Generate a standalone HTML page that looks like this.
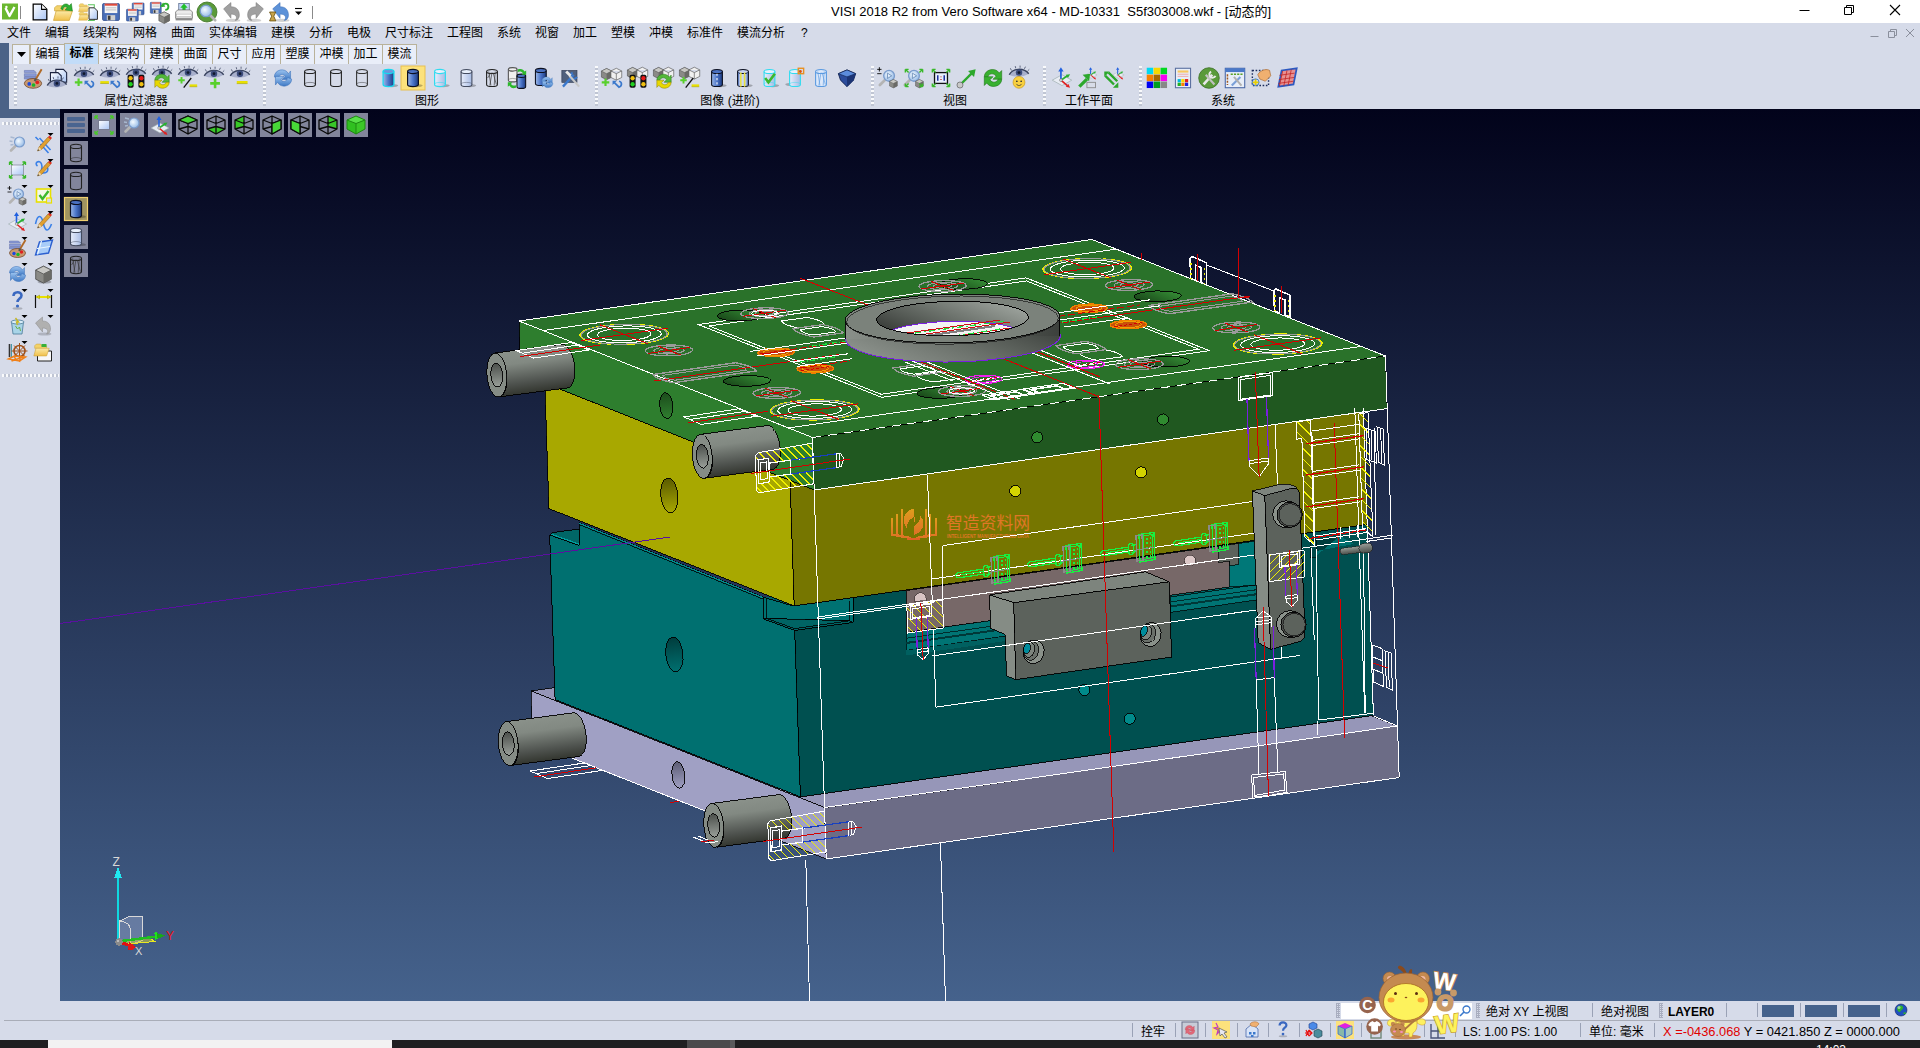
<!DOCTYPE html>
<html lang="zh"><head><meta charset="utf-8"><title>VISI 2018 R2</title>
<style>
*{margin:0;padding:0;box-sizing:border-box}
html,body{width:1920px;height:1048px;overflow:hidden;background:#d6dbe9;font-family:"Liberation Sans","Noto Sans CJK SC",sans-serif;font-size:12px;color:#000}
#app{position:absolute;left:0;top:0;width:1920px;height:1048px;overflow:hidden;background:#d6dbe9}
.abs{position:absolute}
#title{left:0;top:0;width:1920px;height:23px;background:#fff}
#ttext{left:831px;top:4px;width:440px;height:16px;line-height:16px;font-size:13px;white-space:pre;text-align:center;color:#000}
#menu{left:0;top:23px;width:1920px;height:20px;background:#d6dbe9}
.mi{position:absolute;top:1px;height:18px;line-height:18px;font-size:12px;white-space:nowrap}
#strip1{left:0;top:43px;width:9px;height:66px;background:#4b6287}
#strip2{left:0;top:109px;width:60px;height:9px;background:#4b6287}
#tabs{left:12px;top:44px;height:20px}
.tab{position:absolute;top:0;height:20px;line-height:18px;text-align:center;font-size:12px;background:#e9eef9;border:1px solid #b9b29a;border-bottom:none;white-space:nowrap}
.tab.act{font-weight:bold;background:#c2dcf8;border-color:#b9b29a;top:-1px;height:21px;line-height:19px}
#ribbon{left:9px;top:64px;width:1911px;height:45px;background:#d6dbe9}
.grip{position:absolute;width:3px;top:66px;height:40px;background-image:linear-gradient(rgba(255,255,255,.85) 50%,rgba(150,155,170,.35) 50%);background-size:3px 4px}
.glabel{position:absolute;top:94px;height:15px;line-height:15px;font-size:12px;text-align:center;white-space:nowrap;width:120px}
#left{left:0;top:118px;width:60px;height:883px;background:#d6dbe9}
.hgrip{position:absolute;left:2px;width:57px;height:3px;background-image:linear-gradient(90deg,rgba(255,255,255,.85) 50%,rgba(150,155,170,.35) 50%);background-size:4px 3px}
#view{left:60px;top:109px;width:1860px;height:892px;background:linear-gradient(#02031b 0%,#45628c 100%);overflow:hidden}
#st1{left:0;top:1001px;width:1920px;height:19px;background:#d6dbe9}
#st2{left:0;top:1020px;width:1920px;height:20px;background:#d6dbe9}
#task{left:0;top:1040px;width:1920px;height:8px;background:#1f1f21}
.st{position:absolute;white-space:pre;font-size:12px;height:16px;line-height:16px}
.vsep{position:absolute;width:1px;background:#9aa2b6}
.vb{position:absolute;width:24px;height:24px;background:#82859b}
.vb.sel{background:#b9a86a;border:1px solid #e8c860}
svg{position:absolute;overflow:visible}
</style></head><body><div id="app">
<div id="title" class="abs"></div>
<div id="ttext" class="abs">VISI 2018 R2 from Vero Software x64 - MD-10331  S5f303008.wkf - [动态的]</div>
<svg style="left:1790px;top:0" width="130" height="23" viewBox="0 0 130 23"><path d="M9.5 10.5h10" stroke="#000" stroke-width="1" fill="none"/><path d="M54.5 7.5h7v7h-7z M56.5 7.5v-2h7v7h-2" stroke="#000" stroke-width="1" fill="none"/><path d="M100 5l10 10M110 5l-10 10" stroke="#000" stroke-width="1.1" fill="none"/></svg>
<div id="menu" class="abs">
<span class="mi" style="left:7px">文件</span>
<span class="mi" style="left:45px">编辑</span>
<span class="mi" style="left:83px">线架构</span>
<span class="mi" style="left:133px">网格</span>
<span class="mi" style="left:171px">曲面</span>
<span class="mi" style="left:209px">实体编辑</span>
<span class="mi" style="left:271px">建模</span>
<span class="mi" style="left:309px">分析</span>
<span class="mi" style="left:347px">电极</span>
<span class="mi" style="left:385px">尺寸标注</span>
<span class="mi" style="left:447px">工程图</span>
<span class="mi" style="left:497px">系统</span>
<span class="mi" style="left:535px">视窗</span>
<span class="mi" style="left:573px">加工</span>
<span class="mi" style="left:611px">塑模</span>
<span class="mi" style="left:649px">冲模</span>
<span class="mi" style="left:687px">标准件</span>
<span class="mi" style="left:737px">模流分析</span>
<span class="mi" style="left:801px">?</span>
</div>
<svg style="left:1865px;top:25px" width="55" height="16" viewBox="0 0 55 16"><path d="M5.5 11.5h8" stroke="#8a8f9c" stroke-width="1" fill="none"/><path d="M23.5 6.5h6v6h-6z M25.5 6.5v-2h6v6h-2" stroke="#8a8f9c" stroke-width="1" fill="none"/><path d="M41 4l8 8M49 4l-8 8" stroke="#8a8f9c" stroke-width="1" fill="none"/></svg>
<div id="strip1" class="abs"></div><div id="strip2" class="abs"></div>
<div id="tabs" class="abs">
<div class="tab" style="left:0px;width:18px"><svg style="left:4px;top:7px" width="9" height="5"><path d="M0 0h9l-4.5 5z" fill="#000"/></svg></div>
<div class="tab" style="left:18px;width:35px">编辑</div>
<div class="tab act" style="left:52px;width:35px">标准</div>
<div class="tab" style="left:86px;width:47px">线架构</div>
<div class="tab" style="left:132px;width:35px">建模</div>
<div class="tab" style="left:166px;width:35px">曲面</div>
<div class="tab" style="left:200px;width:35px">尺寸</div>
<div class="tab" style="left:234px;width:35px">应用</div>
<div class="tab" style="left:268px;width:35px">塑膜</div>
<div class="tab" style="left:302px;width:35px">冲模</div>
<div class="tab" style="left:336px;width:35px">加工</div>
<div class="tab" style="left:370px;width:35px">模流</div>
</div>
<div id="ribbon" class="abs"></div>
<div class="grip" style="left:14px"></div>
<div class="grip" style="left:263px"></div>
<div class="grip" style="left:595px"></div>
<div class="grip" style="left:871px"></div>
<div class="grip" style="left:1043px"></div>
<div class="grip" style="left:1139px"></div>
<div class="glabel" style="left:76px">属性/过滤器</div>
<div class="glabel" style="left:367px">图形</div>
<div class="glabel" style="left:670px">图像 (进阶)</div>
<div class="glabel" style="left:895px">视图</div>
<div class="glabel" style="left:1029px">工作平面</div>
<div class="glabel" style="left:1163px">系统</div>
<div id="left" class="abs"><div class="hgrip" style="top:4px"></div><div class="hgrip" style="top:256px"></div></div>
<div id="view" class="abs"></div>
<div id="st1" class="abs"></div><div id="st2" class="abs"></div><div id="task" class="abs"></div>
<div class="abs" style="left:4px;top:1020px;width:1916px;height:1px;background:#a9adb8"></div>
<div class="abs" style="left:1341px;top:1003px;width:131px;height:16px;background:#fff"></div>
<div class="abs" style="left:1336px;top:1003px;width:4px;height:15px;background-image:linear-gradient(#8a90a4 50%,rgba(0,0,0,0) 50%),linear-gradient(90deg,#8a90a4 50%,rgba(0,0,0,0) 50%);background-size:2px 2px;opacity:.6"></div>
<div class="abs" style="left:1476px;top:1003px;width:4px;height:15px;background-image:linear-gradient(#8a90a4 50%,rgba(0,0,0,0) 50%),linear-gradient(90deg,#8a90a4 50%,rgba(0,0,0,0) 50%);background-size:2px 2px;opacity:.6"></div>
<div class="abs" style="left:1659px;top:1003px;width:4px;height:15px;background-image:linear-gradient(#8a90a4 50%,rgba(0,0,0,0) 50%),linear-gradient(90deg,#8a90a4 50%,rgba(0,0,0,0) 50%);background-size:2px 2px;opacity:.6"></div>
<span class="st" style="left:1486px;top:1004px">绝对 XY 上视图</span>
<span class="st" style="left:1601px;top:1004px">绝对视图</span>
<span class="st" style="left:1668px;top:1004px;font-weight:bold">LAYER0</span>
<div class="vsep" style="left:1592px;top:1003px;height:14px"></div>
<div class="vsep" style="left:1726px;top:1003px;height:14px"></div>
<div class="vsep" style="left:1757px;top:1003px;height:14px"></div>
<div class="vsep" style="left:1800px;top:1003px;height:14px"></div>
<div class="vsep" style="left:1843px;top:1003px;height:14px"></div>
<div class="vsep" style="left:1886px;top:1003px;height:14px"></div>
<div class="abs" style="left:1762px;top:1005px;width:32px;height:12px;background:#45628c"></div>
<div class="abs" style="left:1805px;top:1005px;width:32px;height:12px;background:#45628c"></div>
<div class="abs" style="left:1848px;top:1005px;width:32px;height:12px;background:#45628c"></div>
<span class="st" style="left:1141px;top:1024px">拴牢</span>
<span class="st" style="left:1463px;top:1024px">LS: 1.00 PS: 1.00</span>
<span class="st" style="left:1589px;top:1024px">单位: 毫米</span>
<span class="st" style="left:1663px;top:1024px;font-size:12.85px"><span style="color:#e00000">X =-0436.068</span> Y = 0421.850 Z = 0000.000</span>
<div class="vsep" style="left:1132px;top:1023px;height:14px"></div>
<div class="vsep" style="left:1175px;top:1023px;height:14px"></div>
<div class="vsep" style="left:1205px;top:1023px;height:14px"></div>
<div class="vsep" style="left:1237px;top:1023px;height:14px"></div>
<div class="vsep" style="left:1268px;top:1023px;height:14px"></div>
<div class="vsep" style="left:1299px;top:1023px;height:14px"></div>
<div class="vsep" style="left:1330px;top:1023px;height:14px"></div>
<div class="vsep" style="left:1361px;top:1023px;height:14px"></div>
<div class="vsep" style="left:1424px;top:1023px;height:14px"></div>
<div class="vsep" style="left:1455px;top:1023px;height:14px"></div>
<div class="vsep" style="left:1580px;top:1023px;height:14px"></div>
<div class="vsep" style="left:1654px;top:1023px;height:14px"></div>
<div class="abs" style="left:48px;top:1040px;width:344px;height:8px;background:#f2f2f2"></div>
<div class="abs" style="left:687px;top:1040px;width:48px;height:8px;background:#4a4a4c"></div>
<div class="abs" style="left:730px;top:1040px;width:5px;height:8px;background:#5a5a5c"></div>
<div class="abs" style="left:1816px;top:1044px;font-size:12px;color:#fff;line-height:12px;height:4px;overflow:hidden">14:03</div>
<svg style="left:0;top:0" width="1920" height="1048" viewBox="0 0 1920 1048">

<defs>
<linearGradient id="gDoc" x1="0" y1="0" x2="1" y2="1"><stop offset="0" stop-color="#fff"/><stop offset="1" stop-color="#a8c4f4"/></linearGradient>
<linearGradient id="gFold" x1="0" y1="0" x2="0" y2="1"><stop offset="0" stop-color="#fbe9a6"/><stop offset="1" stop-color="#f0c04a"/></linearGradient>
<linearGradient id="gBlue" x1="0" y1="0" x2="1" y2="0"><stop offset="0" stop-color="#9cb8e8"/><stop offset=".5" stop-color="#4a74c8"/><stop offset="1" stop-color="#1c3a80"/></linearGradient>
<linearGradient id="gBlueL" x1="0" y1="0" x2="1" y2="0"><stop offset="0" stop-color="#e8eefc"/><stop offset="1" stop-color="#a8bce4"/></linearGradient>
<linearGradient id="gGray" x1="0" y1="0" x2="0" y2="1"><stop offset="0" stop-color="#d8d8d8"/><stop offset="1" stop-color="#808080"/></linearGradient>
<linearGradient id="gGreen" x1="0" y1="0" x2="0" y2="1"><stop offset="0" stop-color="#7fe07a"/><stop offset="1" stop-color="#1f9a22"/></linearGradient>
<linearGradient id="gArr" x1="0" y1="0" x2="0" y2="1"><stop offset="0" stop-color="#9cc4f0"/><stop offset="1" stop-color="#3d78c4"/></linearGradient>
<radialGradient id="gLens" cx=".4" cy=".4" r=".7"><stop offset="0" stop-color="#f4faff"/><stop offset="1" stop-color="#8cb4e4"/></radialGradient>
<linearGradient id="gCylG" x1="0" y1="0" x2="0" y2="1"><stop offset="0" stop-color="#8a918a"/><stop offset=".3" stop-color="#828982"/><stop offset=".75" stop-color="#4e524e"/><stop offset="1" stop-color="#33362f"/></linearGradient>
<linearGradient id="gHoleG" x1="0" y1="0" x2="0" y2="1"><stop offset="0" stop-color="#4a4e4a"/><stop offset="1" stop-color="#9aa09a"/></linearGradient>
<linearGradient id="gRing" x1="0" y1="0" x2="1" y2="0"><stop offset="0" stop-color="#8a908a"/><stop offset=".45" stop-color="#6a706a"/><stop offset="1" stop-color="#3c403c"/></linearGradient>
<linearGradient id="gRingIn" x1="0" y1="0" x2="1" y2="0"><stop offset="0" stop-color="#3c403c"/><stop offset=".5" stop-color="#6a706a"/><stop offset="1" stop-color="#9aa09a"/></linearGradient>
<linearGradient id="gHoleGr" x1="0" y1="0" x2="1" y2="0"><stop offset="0" stop-color="#1a4a1a"/><stop offset="1" stop-color="#348a34"/></linearGradient>
<linearGradient id="gHoleGrV" x1="0" y1="0" x2="0" y2="1"><stop offset="0" stop-color="#1c4c1c"/><stop offset="1" stop-color="#2f7f2f"/></linearGradient>
<linearGradient id="gHoleY" x1="0" y1="0" x2="0" y2="1"><stop offset="0" stop-color="#5a5a00"/><stop offset="1" stop-color="#a8a800"/></linearGradient>
<linearGradient id="gHoleT" x1="0" y1="0" x2="0" y2="1"><stop offset="0" stop-color="#003c3c"/><stop offset="1" stop-color="#007070"/></linearGradient>
<linearGradient id="gHoleL" x1="0" y1="0" x2="0" y2="1"><stop offset="0" stop-color="#5c5c74"/><stop offset="1" stop-color="#a0a0c4"/></linearGradient>
<linearGradient id="gLogo" x1="0" y1="0" x2="0" y2="1"><stop offset="0" stop-color="#e8a020"/><stop offset="1" stop-color="#e8702a"/></linearGradient>
</defs>

<clipPath id="vclip"><rect x="60" y="109" width="1860" height="892"/></clipPath>
<g clip-path="url(#vclip)" shape-rendering="crispEdges">
<polygon points="531.0,691.0 1104.0,609.5 1397.5,726.0 824.5,807.5" fill="#9696b8" stroke="#000" stroke-width="0.8" /><polygon points="531.0,691.0 824.5,807.5 826.2,859.0 532.7,742.5" fill="#a0a0c4" stroke="#000" stroke-width="0.8" /><polygon points="824.5,807.5 1397.5,726.0 1399.2,777.5 826.2,859.0" fill="#6c6c86" stroke="#000" stroke-width="0.8" />
<polygon points="794.7,630.4 853.4,622.4 853.4,597.5 1367.2,524.4 1373.4,715.4 800.4,796.9" fill="#005050" stroke="#000" stroke-width="0.9" /><polygon points="549.7,535.0 579.1,545.4 579.1,522.7 763.4,597.2 763.4,618.9 794.7,630.4 800.4,796.9 555.1,699.6" fill="#007070" stroke="#000" stroke-width="0.9" /><polyline points="579.1,523.2 763.4,597.8" fill="none" stroke="#009090" stroke-width="1" /><polyline points="579.1,524.6 763.4,599.2" fill="none" stroke="#000" stroke-width="0.8" /><polygon points="549.7,535.0 552.0,532.6 579.1,529.1 579.1,545.4" fill="#006666" stroke="#000" stroke-width="0.9" /><polyline points="551.5,534.3 579.1,544.2" fill="none" stroke="#00a0a0" stroke-width="1.2" /><polygon points="763.4,597.2 853.4,597.5 853.4,622.4 794.7,630.4 763.4,618.9" fill="#006464" stroke="none" stroke-width="1.0" /><polygon points="763.4,597.2 793.1,606.0 853.4,597.5 853.4,622.4 849.2,620.8 766.4,618.4 763.4,618.9" fill="#007272" stroke="#000" stroke-width="0.9" /><polygon points="766.4,618.4 849.2,620.8 794.7,628.6" fill="#006464" stroke="#000" stroke-width="0.8" /><polyline points="763.4,618.9 794.7,630.4 853.4,622.4" fill="none" stroke="#000" stroke-width="0.9" /><polyline points="766.4,599.0 766.4,618.4" fill="none" stroke="#000" stroke-width="0.8" /><polyline points="849.5,601.0 849.5,620.8" fill="none" stroke="#000" stroke-width="0.8" /><polyline points="794.7,603.0 853.4,597.3" fill="none" stroke="#00a0a0" stroke-width="1.2" />
<polygon points="544.8,383.1 790.1,480.4 794.2,605.9 548.9,508.6" fill="#a8a800" stroke="#000" stroke-width="0.9" /><polygon points="790.1,480.4 1363.1,398.9 1367.2,524.4 794.2,605.9" fill="#767600" stroke="#000" stroke-width="0.9" />
<polygon points="906.0,590.5 1256.0,541.0 1256.0,600.0 906.0,650.5" fill="#006868" stroke="none" stroke-width="1.0" /><polygon points="906.0,590.5 1229.0,544.8 1229.0,587.0 906.0,632.5" fill="#776868" stroke="#000" stroke-width="0.8" /><path d="M914.600 601.500v-3a5.800 5.800 0 0 1 11.600 0v2z" fill="#d8c4c4" stroke="#3a3030" stroke-width=".6"/><circle cx="1190" cy="560.500" r="5.500" fill="#dcc8c8" stroke="#3a3030" stroke-width=".7"/><polygon points="906.0,632.5 990.0,620.7 1005.5,627.0 1005.5,636.0 906.0,650.5" fill="#007474" stroke="#000" stroke-width="0.7" /><polyline points="906.0,638.3 1005.0,624.3" fill="none" stroke="#002c2c" stroke-width="1" /><polyline points="906.0,643.0 1005.0,629.0" fill="none" stroke="#003838" stroke-width="2" /><polygon points="906.0,650.5 1005.5,636.4 1005.5,641.0 906.0,655.5" fill="#006060" stroke="none" stroke-width="1.0" /><polygon points="1170.0,597.0 1256.0,584.8 1256.0,600.0 1170.0,612.5" fill="#007474" stroke="#000" stroke-width="0.7" /><polyline points="1170.0,602.0 1256.0,589.8" fill="none" stroke="#002c2c" stroke-width="1" /><polyline points="1170.0,606.5 1256.0,594.3" fill="none" stroke="#003838" stroke-width="2" /><polygon points="1229.0,544.8 1256.0,541.0 1256.0,585.0 1229.0,587.0" fill="#007878" stroke="#000" stroke-width="0.7" /><polygon points="1218.5,546.3 1238.6,543.4 1238.6,564.3 1229.5,565.6 1229.5,561.0 1218.5,562.5" fill="#5c625c" stroke="#000" stroke-width="0.7" /><polygon points="989.7,594.8 1145.4,571.8 1169.4,581.8 1013.7,602.7" fill="#7d847d" stroke="#000" stroke-width="0.9" /><polygon points="1013.7,602.7 1169.4,581.8 1171.5,657.0 1015.8,679.6" fill="#5c625c" stroke="#000" stroke-width="0.9" /><polygon points="989.7,594.8 1013.7,602.7 1015.8,679.6 1006.4,675.8 1005.4,634.5 990.4,628.2" fill="#858c85" stroke="#000" stroke-width="0.9" /><ellipse cx="1033.6" cy="651.8" rx="10.500" ry="12" fill="#8a918a" stroke="#000" stroke-width=".9" transform="rotate(12 1033.6 651.8)"/><ellipse cx="1031.1" cy="650.8" rx="7.500" ry="9.500" fill="#6a706a" stroke="#000" stroke-width=".8" transform="rotate(12 1031.1 650.8)"/><ellipse cx="1029.1" cy="649.8" rx="5.500" ry="7.500" fill="#7d847d" stroke="#000" stroke-width=".8" transform="rotate(12 1029.1 649.8)"/><ellipse cx="1027.1" cy="648.3" rx="3.200" ry="5.500" fill="#008c9c" stroke="#000" stroke-width=".8" transform="rotate(14 1027.1 648.3)"/><ellipse cx="1150.6" cy="634.5" rx="10.500" ry="12" fill="#8a918a" stroke="#000" stroke-width=".9" transform="rotate(12 1150.6 634.5)"/><ellipse cx="1148.1" cy="633.5" rx="7.500" ry="9.500" fill="#6a706a" stroke="#000" stroke-width=".8" transform="rotate(12 1148.1 633.5)"/><ellipse cx="1146.1" cy="632.5" rx="5.500" ry="7.500" fill="#7d847d" stroke="#000" stroke-width=".8" transform="rotate(12 1146.1 632.5)"/><ellipse cx="1144.1" cy="631.0" rx="3.200" ry="5.500" fill="#008c9c" stroke="#000" stroke-width=".8" transform="rotate(14 1144.1 631.0)"/>
<polygon points="519.0,321.0 1092.0,239.5 1385.5,356.0 812.5,437.5" fill="#2a722a" stroke="#000" stroke-width="0.9" /><polygon points="519.0,321.0 812.5,437.5 814.2,490.0 520.7,373.5" fill="#2e7e2e" stroke="#000" stroke-width="0.9" /><polygon points="812.5,437.5 1385.5,356.0 1387.2,408.5 814.2,490.0" fill="#205820" stroke="#000" stroke-width="0.9" />
<ellipse cx="666.3" cy="405.6" rx="6.5" ry="13.0" fill="url(#gHoleGrV)" stroke="#000" stroke-width=".9" transform="rotate(-6 666.3 405.6)"/>
<ellipse cx="669.4" cy="495.4" rx="8.5" ry="17.5" fill="url(#gHoleY)" stroke="#000" stroke-width=".9" transform="rotate(-6 669.4 495.4)"/>
<ellipse cx="674.4" cy="654.5" rx="8.6" ry="17.5" fill="url(#gHoleT)" stroke="#000" stroke-width=".9" transform="rotate(-6 674.4 654.5)"/>
<ellipse cx="678.3" cy="775.0" rx="6.3" ry="13.4" fill="url(#gHoleL)" stroke="#000" stroke-width=".9" transform="rotate(-6 678.3 775.0)"/>
<circle cx="1037.3" cy="437.4" r="5.6" fill="#2f8a2f" stroke="#000" stroke-width=".9"/>
<circle cx="1163.2" cy="419.5" r="5.6" fill="#2f8a2f" stroke="#000" stroke-width=".9"/>
<circle cx="1015.3" cy="491.0" r="5.6" fill="#d4d400" stroke="#000" stroke-width=".9"/>
<circle cx="1141.2" cy="472.4" r="5.6" fill="#d4d400" stroke="#000" stroke-width=".9"/>
<circle cx="1084.4" cy="690.0" r="5.6" fill="#008a8a" stroke="#000" stroke-width=".9"/>
<circle cx="1129.7" cy="718.7" r="5.6" fill="#008a8a" stroke="#000" stroke-width=".9"/>
<polyline points="60.0,623.5 670.0,537.0" fill="none" stroke="#5a10a0" stroke-width="1" />
<polygon points="1312.0,540.0 1339.0,536.0 1316.0,556.0" fill="#003c3c" stroke="none" stroke-width="1.0" /><polygon points="1310.0,541.0 1316.0,540.0 1316.0,557.0 1310.0,558.0" fill="#004848" stroke="#000" stroke-width="0.6" /><polygon points="1316.0,556.0 1340.0,536.0 1354.0,544.0 1316.0,551.0" fill="#007070" stroke="none" stroke-width="1.0" />
<polyline points="519.0,321.0 1092.0,239.5 1385.5,356.0" fill="none" stroke="#ffffff" stroke-width="1" />
<polyline points="519.0,321.0 812.5,437.5" fill="none" stroke="#ffffff" stroke-width="1" />
<polyline points="812.5,437.5 1385.5,356.0" fill="none" stroke="#ffffff" stroke-width="1" stroke-dasharray="9 7"/>
<polyline points="543.1,330.6 1116.1,249.1" fill="none" stroke="#ffffff" stroke-width="1" />
<polyline points="788.4,427.9 1361.4,346.4" fill="none" stroke="#ffffff" stroke-width="1" />
<polygon points="698.3,324.5 1026.1,277.9 1209.4,350.7 881.6,397.3" fill="none" stroke="#ffffff" stroke-width="1.0" />
<polygon points="709.1,326.0 1026.5,280.9 1198.7,349.2 881.2,394.3" fill="none" stroke="#ffffff" stroke-width="1.0" />
<polyline points="654.3,380.9 843.4,354.0" fill="none" stroke="#d40000" stroke-width="1" />
<polyline points="1061.1,323.0 1250.2,296.1" fill="none" stroke="#d40000" stroke-width="1" />
<polyline points="799.6,277.9 893.5,315.2" fill="none" stroke="#d40000" stroke-width="1" />
<polyline points="987.5,352.5 1099.0,396.8" fill="none" stroke="#d40000" stroke-width="1" />
<circle r="1" transform="matrix(20.702 -2.948 11.374 4.510 746.90 380.90)" fill="url(#gHoleGr)" stroke="#000" stroke-width="0.9" vector-effect="non-scaling-stroke" />
<circle r="1" transform="matrix(20.702 -2.948 11.374 4.510 740.80 315.50)" fill="url(#gHoleGr)" stroke="#000" stroke-width="0.9" vector-effect="non-scaling-stroke" />
<circle r="1" transform="matrix(20.702 -2.948 11.374 4.510 1157.60 296.30)" fill="url(#gHoleGr)" stroke="#000" stroke-width="0.9" vector-effect="non-scaling-stroke" />
<circle r="1" transform="matrix(20.702 -2.948 11.374 4.510 1166.00 361.60)" fill="url(#gHoleGr)" stroke="#000" stroke-width="0.9" vector-effect="non-scaling-stroke" />
<circle r="1" transform="matrix(20.702 -2.948 11.374 4.510 940.90 393.00)" fill="url(#gHoleGr)" stroke="#000" stroke-width="0.9" vector-effect="non-scaling-stroke" />
<circle r="1" transform="matrix(20.702 -2.948 11.374 4.510 963.60 284.00)" fill="url(#gHoleGr)" stroke="#000" stroke-width="0.9" vector-effect="non-scaling-stroke" />
<circle r="1" transform="matrix(38.863 -5.534 21.352 8.466 624.25 334.36)" fill="none" stroke="#f0f000" stroke-width="1.2" vector-effect="non-scaling-stroke" stroke-dasharray="60 8 90 6 40 10"/>
<circle r="1" transform="matrix(37.640 -5.360 20.680 8.200 624.25 334.36)" fill="none" stroke="#9a9a9a" stroke-width="1" vector-effect="non-scaling-stroke" />
<circle r="1" transform="matrix(32.464 -4.623 17.837 7.072 624.25 334.36)" fill="none" stroke="#ffffff" stroke-width="1" vector-effect="non-scaling-stroke" />
<circle r="1" transform="matrix(23.525 -3.350 12.925 5.125 624.25 334.36)" fill="none" stroke="#ffffff" stroke-width="1" vector-effect="non-scaling-stroke" />
<path d="M580.7 340.6L667.8 328.2M600.3 324.9L648.2 343.8" stroke="#d40000" stroke-width="1.0" fill="none"/>
<circle r="1" transform="matrix(38.863 -5.534 21.352 8.466 814.73 409.96)" fill="none" stroke="#f0f000" stroke-width="1.2" vector-effect="non-scaling-stroke" stroke-dasharray="60 8 90 6 40 10"/>
<circle r="1" transform="matrix(37.640 -5.360 20.680 8.200 814.73 409.96)" fill="none" stroke="#9a9a9a" stroke-width="1" vector-effect="non-scaling-stroke" />
<circle r="1" transform="matrix(32.464 -4.623 17.837 7.072 814.73 409.96)" fill="none" stroke="#ffffff" stroke-width="1" vector-effect="non-scaling-stroke" />
<circle r="1" transform="matrix(23.525 -3.350 12.925 5.125 814.73 409.96)" fill="none" stroke="#ffffff" stroke-width="1" vector-effect="non-scaling-stroke" />
<path d="M771.2 416.2L858.3 403.8M790.8 400.5L838.6 419.4" stroke="#d40000" stroke-width="1.0" fill="none"/>
<circle r="1" transform="matrix(38.863 -5.534 21.352 8.466 1087.24 268.50)" fill="none" stroke="#f0f000" stroke-width="1.2" vector-effect="non-scaling-stroke" stroke-dasharray="60 8 90 6 40 10"/>
<circle r="1" transform="matrix(37.640 -5.360 20.680 8.200 1087.24 268.50)" fill="none" stroke="#9a9a9a" stroke-width="1" vector-effect="non-scaling-stroke" />
<circle r="1" transform="matrix(32.464 -4.623 17.837 7.072 1087.24 268.50)" fill="none" stroke="#ffffff" stroke-width="1" vector-effect="non-scaling-stroke" />
<circle r="1" transform="matrix(23.525 -3.350 12.925 5.125 1087.24 268.50)" fill="none" stroke="#ffffff" stroke-width="1" vector-effect="non-scaling-stroke" />
<path d="M1043.7 274.7L1130.8 262.3M1063.3 259.0L1111.2 278.0" stroke="#d40000" stroke-width="1.0" fill="none"/>
<circle r="1" transform="matrix(38.863 -5.534 21.352 8.466 1277.72 344.11)" fill="none" stroke="#f0f000" stroke-width="1.2" vector-effect="non-scaling-stroke" stroke-dasharray="60 8 90 6 40 10"/>
<circle r="1" transform="matrix(37.640 -5.360 20.680 8.200 1277.72 344.11)" fill="none" stroke="#9a9a9a" stroke-width="1" vector-effect="non-scaling-stroke" />
<circle r="1" transform="matrix(32.464 -4.623 17.837 7.072 1277.72 344.11)" fill="none" stroke="#ffffff" stroke-width="1" vector-effect="non-scaling-stroke" />
<circle r="1" transform="matrix(23.525 -3.350 12.925 5.125 1277.72 344.11)" fill="none" stroke="#ffffff" stroke-width="1" vector-effect="non-scaling-stroke" />
<path d="M1234.2 350.3L1321.2 337.9M1253.8 334.6L1301.6 353.6" stroke="#d40000" stroke-width="1.0" fill="none"/>
<circle r="1" transform="matrix(20.702 -2.948 11.374 4.510 669.00 350.40)" fill="none" stroke="#9a9a9a" stroke-width="1.3" vector-effect="non-scaling-stroke" />
<circle r="1" transform="matrix(13.174 -1.876 7.238 2.870 669.00 350.40)" fill="none" stroke="#9a9a9a" stroke-width="1.1" vector-effect="non-scaling-stroke" />
<circle r="1" transform="matrix(7.998 -1.139 4.395 1.743 669.00 350.40)" fill="none" stroke="#9a9a9a" stroke-width="1" vector-effect="non-scaling-stroke" />
<path d="M647.9 353.4L690.1 347.4M657.4 345.8L680.6 355.0" stroke="#d40000" stroke-width="1.0" fill="none"/>
<circle r="1" transform="matrix(20.702 -2.948 11.374 4.510 776.70 393.00)" fill="none" stroke="#9a9a9a" stroke-width="1.3" vector-effect="non-scaling-stroke" />
<circle r="1" transform="matrix(13.174 -1.876 7.238 2.870 776.70 393.00)" fill="none" stroke="#9a9a9a" stroke-width="1.1" vector-effect="non-scaling-stroke" />
<circle r="1" transform="matrix(7.998 -1.139 4.395 1.743 776.70 393.00)" fill="none" stroke="#9a9a9a" stroke-width="1" vector-effect="non-scaling-stroke" />
<path d="M755.6 396.0L797.8 390.0M765.1 388.4L788.3 397.6" stroke="#d40000" stroke-width="1.0" fill="none"/>
<circle r="1" transform="matrix(20.702 -2.948 11.374 4.510 764.50 313.20)" fill="none" stroke="#9a9a9a" stroke-width="1.3" vector-effect="non-scaling-stroke" />
<circle r="1" transform="matrix(13.174 -1.876 7.238 2.870 764.50 313.20)" fill="none" stroke="#9a9a9a" stroke-width="1.1" vector-effect="non-scaling-stroke" />
<circle r="1" transform="matrix(7.998 -1.139 4.395 1.743 764.50 313.20)" fill="none" stroke="#9a9a9a" stroke-width="1" vector-effect="non-scaling-stroke" />
<path d="M743.4 316.2L785.6 310.2M752.9 308.6L776.1 317.8" stroke="#d40000" stroke-width="1.0" fill="none"/>
<circle r="1" transform="matrix(20.702 -2.948 11.374 4.510 1129.10 285.00)" fill="none" stroke="#9a9a9a" stroke-width="1.3" vector-effect="non-scaling-stroke" />
<circle r="1" transform="matrix(13.174 -1.876 7.238 2.870 1129.10 285.00)" fill="none" stroke="#9a9a9a" stroke-width="1.1" vector-effect="non-scaling-stroke" />
<circle r="1" transform="matrix(7.998 -1.139 4.395 1.743 1129.10 285.00)" fill="none" stroke="#9a9a9a" stroke-width="1" vector-effect="non-scaling-stroke" />
<path d="M1108.0 288.0L1150.2 282.0M1117.5 280.4L1140.7 289.6" stroke="#d40000" stroke-width="1.0" fill="none"/>
<circle r="1" transform="matrix(20.702 -2.948 11.374 4.510 1236.30 327.50)" fill="none" stroke="#9a9a9a" stroke-width="1.3" vector-effect="non-scaling-stroke" />
<circle r="1" transform="matrix(13.174 -1.876 7.238 2.870 1236.30 327.50)" fill="none" stroke="#9a9a9a" stroke-width="1.1" vector-effect="non-scaling-stroke" />
<circle r="1" transform="matrix(7.998 -1.139 4.395 1.743 1236.30 327.50)" fill="none" stroke="#9a9a9a" stroke-width="1" vector-effect="non-scaling-stroke" />
<path d="M1215.2 330.5L1257.4 324.5M1224.7 322.9L1247.9 332.1" stroke="#d40000" stroke-width="1.0" fill="none"/>
<circle r="1" transform="matrix(20.702 -2.948 11.374 4.510 1139.50 364.20)" fill="none" stroke="#9a9a9a" stroke-width="1.3" vector-effect="non-scaling-stroke" />
<circle r="1" transform="matrix(13.174 -1.876 7.238 2.870 1139.50 364.20)" fill="none" stroke="#9a9a9a" stroke-width="1.1" vector-effect="non-scaling-stroke" />
<circle r="1" transform="matrix(7.998 -1.139 4.395 1.743 1139.50 364.20)" fill="none" stroke="#9a9a9a" stroke-width="1" vector-effect="non-scaling-stroke" />
<path d="M1118.4 367.2L1160.6 361.2M1127.9 359.6L1151.1 368.8" stroke="#d40000" stroke-width="1.0" fill="none"/>
<circle r="1" transform="matrix(20.702 -2.948 11.374 4.510 961.90 391.00)" fill="none" stroke="#9a9a9a" stroke-width="1.3" vector-effect="non-scaling-stroke" />
<circle r="1" transform="matrix(13.174 -1.876 7.238 2.870 961.90 391.00)" fill="none" stroke="#9a9a9a" stroke-width="1.1" vector-effect="non-scaling-stroke" />
<circle r="1" transform="matrix(7.998 -1.139 4.395 1.743 961.90 391.00)" fill="none" stroke="#9a9a9a" stroke-width="1" vector-effect="non-scaling-stroke" />
<path d="M940.8 394.0L983.0 388.0M950.3 386.4L973.5 395.6" stroke="#d40000" stroke-width="1.0" fill="none"/>
<circle r="1" transform="matrix(20.702 -2.948 11.374 4.510 942.60 286.00)" fill="none" stroke="#9a9a9a" stroke-width="1.3" vector-effect="non-scaling-stroke" />
<circle r="1" transform="matrix(13.174 -1.876 7.238 2.870 942.60 286.00)" fill="none" stroke="#9a9a9a" stroke-width="1.1" vector-effect="non-scaling-stroke" />
<circle r="1" transform="matrix(7.998 -1.139 4.395 1.743 942.60 286.00)" fill="none" stroke="#9a9a9a" stroke-width="1" vector-effect="non-scaling-stroke" />
<path d="M921.5 289.0L963.7 283.0M931.0 281.4L954.2 290.6" stroke="#d40000" stroke-width="1.0" fill="none"/>
<circle r="1" transform="matrix(11.292 -1.608 6.204 2.460 764.50 313.20)" fill="none" stroke="#ffffff" stroke-width="1" vector-effect="non-scaling-stroke" />
<circle r="1" transform="matrix(11.292 -1.608 6.204 2.460 961.90 391.00)" fill="none" stroke="#ffffff" stroke-width="1" vector-effect="non-scaling-stroke" />
<path d="M652.6 374.5 L735.7 362.7 Q752.0 365.9 756.4 370.9 L673.3 382.7 Q657.0 379.5 652.6 374.5 Z" fill="none" stroke="#9a9a9a" stroke-width="1.4"/>
<path d="M662.7 375.3 L733.9 365.2 Q746.1 366.8 746.3 370.1 L675.1 380.2 Q662.9 378.6 662.7 375.3 Z" fill="none" stroke="#9a9a9a" stroke-width="1"/>
<path d="M1148.6 305.6 L1231.7 293.8 Q1248.0 297.0 1252.4 302.0 L1169.3 313.8 Q1153.0 310.6 1148.6 305.6 Z" fill="none" stroke="#9a9a9a" stroke-width="1.4"/>
<path d="M1158.7 306.4 L1229.9 296.3 Q1242.1 297.9 1242.3 301.2 L1171.1 311.3 Q1158.9 309.7 1158.7 306.4 Z" fill="none" stroke="#9a9a9a" stroke-width="1"/>
<circle r="1" transform="matrix(15.997 -2.278 8.789 3.485 776.00 352.40)" fill="#c8500a" stroke="#f08000" stroke-width="1.4" vector-effect="non-scaling-stroke" />
<circle r="1" transform="matrix(11.292 -1.608 6.204 2.460 776.00 352.40)" fill="none" stroke="#f0a000" stroke-width="1" vector-effect="non-scaling-stroke" />
<polyline points="762.0,354.4 790.0,350.4" fill="none" stroke="#d40000" stroke-width="1" stroke-dasharray="3 2"/>
<circle r="1" transform="matrix(15.997 -2.278 8.789 3.485 815.30 368.70)" fill="#c8500a" stroke="#f08000" stroke-width="1.4" vector-effect="non-scaling-stroke" />
<circle r="1" transform="matrix(11.292 -1.608 6.204 2.460 815.30 368.70)" fill="none" stroke="#f0a000" stroke-width="1" vector-effect="non-scaling-stroke" />
<polyline points="801.3,370.7 829.3,366.7" fill="none" stroke="#d40000" stroke-width="1" stroke-dasharray="3 2"/>
<circle r="1" transform="matrix(15.997 -2.278 8.789 3.485 1128.50 324.60)" fill="#c8500a" stroke="#f08000" stroke-width="1.4" vector-effect="non-scaling-stroke" />
<circle r="1" transform="matrix(11.292 -1.608 6.204 2.460 1128.50 324.60)" fill="none" stroke="#f0a000" stroke-width="1" vector-effect="non-scaling-stroke" />
<polyline points="1114.5,326.6 1142.5,322.6" fill="none" stroke="#d40000" stroke-width="1" stroke-dasharray="3 2"/>
<circle r="1" transform="matrix(15.997 -2.278 8.789 3.485 1089.20 308.30)" fill="#c8500a" stroke="#f08000" stroke-width="1.4" vector-effect="non-scaling-stroke" />
<circle r="1" transform="matrix(11.292 -1.608 6.204 2.460 1089.20 308.30)" fill="none" stroke="#f0a000" stroke-width="1" vector-effect="non-scaling-stroke" />
<polyline points="1075.2,310.3 1103.2,306.3" fill="none" stroke="#d40000" stroke-width="1" stroke-dasharray="3 2"/>
<circle r="1" transform="matrix(15.997 -2.278 8.789 3.485 983.50 379.40)" fill="none" stroke="#f020f0" stroke-width="1.2" vector-effect="non-scaling-stroke" />
<circle r="1" transform="matrix(10.351 -1.474 5.687 2.255 983.50 379.40)" fill="none" stroke="#f020f0" stroke-width="1" vector-effect="non-scaling-stroke" />
<polyline points="969.5,381.4 997.5,377.4" fill="none" stroke="#d40000" stroke-width="1" stroke-dasharray="3 2"/>
<polyline points="973.5,380.4 991.5,377.8" fill="none" stroke="#ffffff" stroke-width="1" stroke-dasharray="4 3"/>
<circle r="1" transform="matrix(15.997 -2.278 8.789 3.485 1086.00 364.40)" fill="none" stroke="#f020f0" stroke-width="1.2" vector-effect="non-scaling-stroke" />
<circle r="1" transform="matrix(10.351 -1.474 5.687 2.255 1086.00 364.40)" fill="none" stroke="#f020f0" stroke-width="1" vector-effect="non-scaling-stroke" />
<polyline points="1072.0,366.4 1100.0,362.4" fill="none" stroke="#d40000" stroke-width="1" stroke-dasharray="3 2"/>
<polyline points="1076.0,365.4 1094.0,362.8" fill="none" stroke="#ffffff" stroke-width="1" stroke-dasharray="4 3"/>
<path d="M781.3 321.0 L807.1 317.4 Q821.8 320.0 824.7 324.4 L798.9 328.0 Q784.2 325.4 781.3 321.0 Z" fill="none" stroke="#ffffff" stroke-width="1"/>
<path d="M915.8 375.0 L941.6 371.4 Q956.3 374.0 959.2 378.4 L933.4 382.0 Q918.7 379.4 915.8 375.0 Z" fill="none" stroke="#ffffff" stroke-width="1"/>
<path d="M1079.3 353.3 L1105.1 349.7 Q1119.8 352.3 1122.7 356.7 L1096.9 360.3 Q1082.2 357.7 1079.3 353.3 Z" fill="none" stroke="#ffffff" stroke-width="1"/>
<path d="M944.3 298.3 L970.1 294.7 Q984.8 297.3 987.7 301.7 L961.9 305.3 Q947.2 302.7 944.3 298.3 Z" fill="none" stroke="#ffffff" stroke-width="1"/>
<path d="M792.8 328.8 L822.5 324.6 Q838.8 327.8 843.2 332.8 L813.5 337.0 Q797.2 333.8 792.8 328.8 Z" fill="none" stroke="#9a9a9a" stroke-width="1.3"/>
<path d="M800.4 329.7 L822.2 326.6 Q834.8 328.4 835.6 331.9 L813.8 335.0 Q801.2 333.2 800.4 329.7 Z" fill="none" stroke="#ffffff" stroke-width="1"/>
<path d="M892.7 368.0 L922.4 363.8 Q938.7 367.0 943.1 372.0 L913.4 376.2 Q897.1 373.0 892.7 368.0 Z" fill="none" stroke="#9a9a9a" stroke-width="1.3"/>
<path d="M900.3 368.9 L922.1 365.8 Q934.7 367.6 935.5 371.1 L913.7 374.2 Q901.1 372.4 900.3 368.9 Z" fill="none" stroke="#ffffff" stroke-width="1"/>
<path d="M1055.8 345.6 L1085.5 341.4 Q1101.8 344.6 1106.2 349.6 L1076.5 353.8 Q1060.2 350.6 1055.8 345.6 Z" fill="none" stroke="#9a9a9a" stroke-width="1.3"/>
<path d="M1063.4 346.5 L1085.2 343.4 Q1097.8 345.2 1098.6 348.7 L1076.8 351.8 Q1064.2 350.0 1063.4 346.5 Z" fill="none" stroke="#ffffff" stroke-width="1"/>
<path d="M959.8 304.0 L989.5 299.8 Q1005.8 303.0 1010.2 308.0 L980.5 312.2 Q964.2 309.0 959.8 304.0 Z" fill="none" stroke="#9a9a9a" stroke-width="1.3"/>
<path d="M967.4 304.9 L989.2 301.8 Q1001.8 303.6 1002.6 307.1 L980.8 310.2 Q968.2 308.4 967.4 304.9 Z" fill="none" stroke="#ffffff" stroke-width="1"/>
<polyline points="750.0,351.5 845.0,338.0" fill="none" stroke="#ffffff" stroke-width="1" />
<polyline points="757.0,356.0 850.0,342.8" fill="none" stroke="#ffffff" stroke-width="1" />
<polyline points="790.0,362.0 848.0,353.8" fill="none" stroke="#ffffff" stroke-width="1" />
<polyline points="797.0,366.5 852.0,358.7" fill="none" stroke="#ffffff" stroke-width="1" />
<polyline points="1060.0,320.0 1160.0,305.8" fill="none" stroke="#ffffff" stroke-width="1" />
<polyline points="1057.0,313.0 1150.0,299.8" fill="none" stroke="#ffffff" stroke-width="1" />
<polyline points="1064.0,327.0 1128.0,317.9" fill="none" stroke="#ffffff" stroke-width="1" />
<polyline points="760.0,354.0 846.0,341.8" fill="none" stroke="#d40000" stroke-width="1" stroke-dasharray="7 3"/>
<polyline points="800.0,368.0 850.0,360.9" fill="none" stroke="#d40000" stroke-width="1" stroke-dasharray="7 3"/>
<polyline points="1058.0,316.5 1140.0,304.8" fill="none" stroke="#d40000" stroke-width="1" stroke-dasharray="7 3"/>
<polyline points="812.0,346.0 846.0,341.2" fill="none" stroke="#20e040" stroke-width="1.2" stroke-dasharray="5 2 1 2"/>
<polyline points="800.0,362.0 835.0,357.0" fill="none" stroke="#20e040" stroke-width="1.2" stroke-dasharray="5 2 1 2"/>
<polyline points="1062.0,322.0 1098.0,316.9" fill="none" stroke="#20e040" stroke-width="1.2" stroke-dasharray="5 2 1 2"/>
<polyline points="905.0,362.0 953.0,381.0" fill="none" stroke="#ffffff" stroke-width="1" />
<polyline points="912.0,361.0 1010.0,400.0" fill="none" stroke="#ffffff" stroke-width="1" />
<polyline points="922.0,360.0 1020.0,399.0" fill="none" stroke="#ffffff" stroke-width="1" />
<polyline points="1030.0,352.0 1110.0,384.0" fill="none" stroke="#ffffff" stroke-width="1" />
<polyline points="1040.0,350.0 1082.0,367.0" fill="none" stroke="#ffffff" stroke-width="1" />
<polyline points="917.0,360.5 1015.0,399.5" fill="none" stroke="#d40000" stroke-width="1" />
<polyline points="1035.0,351.0 1100.0,377.0" fill="none" stroke="#d40000" stroke-width="1" />
<polygon points="982.0,395.0 1022.0,389.4 1034.0,394.2 994.0,399.8" fill="none" stroke="#ffffff" stroke-width="1" />
<polygon points="990.0,395.5 1016.0,391.9 1024.0,395.1 998.0,398.7" fill="none" stroke="#ffffff" stroke-width="1.6" />
<polygon points="1023.0,389.0 1063.0,383.4 1075.0,388.2 1035.0,393.8" fill="none" stroke="#ffffff" stroke-width="1" />
<polygon points="1031.0,389.5 1057.0,385.9 1065.0,389.1 1039.0,392.7" fill="none" stroke="#ffffff" stroke-width="1.6" />
<circle r="1" transform="matrix(94.100 -13.400 51.700 20.500 953.00 337.50)" fill="url(#gRing)" stroke="#7a20e0" stroke-width="1" vector-effect="non-scaling-stroke" /><polygon points="845.1,320.4 1059.9,316.6 1060.4,335.6 845.6,339.4" fill="url(#gRing)"/><path d="M845.1 320.4v19.0M1059.9 316.6v19.0" stroke="#000" stroke-width=".9"/><circle r="1" transform="matrix(94.100 -13.400 51.700 20.500 952.50 318.50)" fill="#7b827b" stroke="#000" stroke-width="0.9" vector-effect="non-scaling-stroke" /><circle r="1" transform="matrix(92.688 -13.199 50.925 20.192 952.50 320.10)" fill="none" stroke="#1a1a1a" stroke-width="0.7" vector-effect="non-scaling-stroke" clip-path="url(#ringfront)"/><clipPath id="ringhole"><circle r="1" transform="matrix(66.435 -9.460 36.500 14.473 952.50 318.50)"/></clipPath><circle r="1" transform="matrix(66.435 -9.460 36.500 14.473 952.50 318.50)" fill="url(#gRingIn)" stroke="#000" stroke-width="0.9" vector-effect="non-scaling-stroke" /><g clip-path="url(#ringhole)"><circle r="1" transform="matrix(62.449 -8.893 34.310 13.605 953.00 337.50)" fill="#f4f4f4" stroke="#7a20e0" stroke-width="1" vector-effect="non-scaling-stroke" /><path d="M900 334l100 -14M905 337l105 -15M930 340l80 -12" stroke="#d01010" stroke-width="1" fill="none"/><path d="M915 333l90 -12M940 338l60 -9" stroke="#20e040" stroke-width="1.200" fill="none" stroke-dasharray="6 3 2 3"/><path d="M925 336l70 -10" stroke="#808080" stroke-width="2" fill="none"/></g><circle r="1" transform="matrix(66.435 -9.460 36.500 14.473 952.50 318.50)" fill="none" stroke="#000" stroke-width="0.9" vector-effect="non-scaling-stroke" />
<g opacity=".92"><g transform="translate(913.500,524)" fill="none" stroke="url(#gLogo)"><path d="M-22.0 -6.5V11.0q10 0 19.0 3.500" stroke-width="2"/><path d="M22.0 -6.5V11.0q-10 0 -19.0 3.500" stroke-width="2"/><path d="M-16.5 -10.5V11.8q10 0 13.5 3.500" stroke-width="2"/><path d="M16.5 -10.5V11.8q-10 0 -13.5 3.500" stroke-width="2"/><path d="M-12.0 -15.0V12.6q10 0 9.0 3.500" stroke-width="2"/><path d="M12.0 -15.0V12.6q-10 0 -9.0 3.500" stroke-width="2"/></g><path d="M913.500 509c-9 1 -13 11 -7 19c1 -8 5 -10 8 -11c-2 5 0 9 -1 18c9 -2 13 -12 7 -19c-1 7 -4 9 -7 10c2 -5 1 -10 0 -17z" fill="url(#gLogo)"/><rect x="907" y="537.500" width="13" height="2.500" fill="#e8602a"/><text x="946" y="529" font-family="Liberation Sans,Noto Sans CJK SC,sans-serif" font-size="17" fill="#e8782a" textLength="84" lengthAdjust="spacingAndGlyphs">智造资料网</text><text x="947" y="537.500" font-family="Liberation Sans,sans-serif" font-size="4.600" font-weight="bold" fill="#e8782a" textLength="82" lengthAdjust="spacingAndGlyphs">INTELLIGENT MANUFACTURING DATA</text></g>
<polyline points="814.2,490.0 1387.2,408.5" fill="none" stroke="#ffffff" stroke-width="1" />
<polyline points="812.5,437.5 826.2,859.0" fill="none" stroke="#ffffff" stroke-width="1" />
<polyline points="1385.5,356.0 1399.2,777.5" fill="none" stroke="#ffffff" stroke-width="1" />
<polyline points="824.5,807.5 1397.5,726.0" fill="none" stroke="#ffffff" stroke-width="1" />
<polyline points="826.2,859.0 1399.2,777.5" fill="none" stroke="#ffffff" stroke-width="1" />
<polyline points="572.8,736.8 567.9,756.5 708.8,812.4" fill="none" stroke="#ffffff" stroke-width="1" />
<polyline points="1397.5,726.0 1373.4,715.9" fill="none" stroke="#ffffff" stroke-width="1" />
<polyline points="1363.4,408.4 1373.4,715.4" fill="none" stroke="#ffffff" stroke-width="1" />
<polyline points="1354.8,408.2 1364.7,712.7" fill="none" stroke="#ffffff" stroke-width="1" />
<polyline points="817.8,617.0 1370.0,538.5" fill="none" stroke="#ffffff" stroke-width="1" />
<polyline points="818.0,619.0 934.0,602.5" fill="none" stroke="#ffffff" stroke-width="1" />
<polyline points="942.8,545.6 1262.0,500.2" fill="none" stroke="#ffffff" stroke-width="1" />
<polyline points="932.3,579.0 1254.0,533.2" fill="none" stroke="#ffffff" stroke-width="1" />
<polyline points="932.2,656.0 1262.0,609.1" fill="none" stroke="#ffffff" stroke-width="1" />
<polyline points="936.0,707.2 1254.0,662.0" fill="none" stroke="#ffffff" stroke-width="1" />
<polyline points="1254.0,662.0 1300.0,655.5" fill="none" stroke="#ffffff" stroke-width="1" />
<polyline points="905.0,604.6 1258.0,554.4" fill="none" stroke="#ffffff" stroke-width="1" />
<polyline points="927.4,475.0 932.3,603.0" fill="none" stroke="#ffffff" stroke-width="1" />
<polyline points="942.8,545.6 942.7,601.0" fill="none" stroke="#ffffff" stroke-width="1" />
<polyline points="933.3,630.0 936.0,707.2" fill="none" stroke="#ffffff" stroke-width="1" />
<polyline points="817.8,617.0 818.2,621.0" fill="none" stroke="#ffffff" stroke-width="1" />
<polyline points="826.0,823.0 1290.0,757.0" fill="none" stroke="#ffffff" stroke-width="1" opacity=".0"/>
<polyline points="1098.9,394.8 1113.8,851.8" fill="none" stroke="#d40000" stroke-width="1" />
<polyline points="1334.2,423.0 1344.6,738.0" fill="none" stroke="#d40000" stroke-width="1" />
<polyline points="1275.0,425.0 1284.0,640.0" fill="none" stroke="#ffffff" stroke-width="1" />
<polyline points="1311.0,548.0 1314.2,640.0" fill="none" stroke="#ffffff" stroke-width="1" />
<polyline points="1316.0,548.0 1318.7,720.0" fill="none" stroke="#ffffff" stroke-width="1" />
<polyline points="1318.7,720.0 1373.0,713.3" fill="none" stroke="#ffffff" stroke-width="1" />
<polyline points="1317.0,720.5 1317.8,735.0" fill="none" stroke="#ffffff" stroke-width="1" />
<polyline points="1363.5,548.0 1365.2,713.0" fill="none" stroke="#ffffff" stroke-width="1" />
<polyline points="1366.0,539.0 1392.5,535.3" fill="none" stroke="#ffffff" stroke-width="1" />
<polyline points="1366.0,541.5 1392.5,537.8" fill="none" stroke="#ffffff" stroke-width="1" />
<polyline points="1374.0,427.0 1376.0,535.0" fill="none" stroke="#ffffff" stroke-width="1" />
<polyline points="1272.5,658.0 1281.6,658.4 1281.0,620.0" fill="none" stroke="#ffffff" stroke-width="1" />
<polyline points="805.8,860.0 809.5,1001.0" fill="none" stroke="#ffffff" stroke-width="1" />
<polyline points="940.4,842.0 945.5,1001.0" fill="none" stroke="#ffffff" stroke-width="1" />
<clipPath id="hcolL"><polygon points="1296.3,422.0 1310.6,420.0 1311.0,436.0 1314.3,545.0 1304.8,537.0 1301.9,438.5 1296.8,439.2"/></clipPath><path d="M1169.3 420.0l125.0 125.0M1179.8 420.0l125.0 125.0M1190.3 420.0l125.0 125.0M1200.8 420.0l125.0 125.0M1211.3 420.0l125.0 125.0M1221.8 420.0l125.0 125.0M1232.3 420.0l125.0 125.0M1242.8 420.0l125.0 125.0M1253.3 420.0l125.0 125.0M1263.8 420.0l125.0 125.0M1274.3 420.0l125.0 125.0M1284.8 420.0l125.0 125.0M1295.3 420.0l125.0 125.0M1305.8 420.0l125.0 125.0" stroke="#f0f000" stroke-width="1" fill="none" clip-path="url(#hcolL)"/><polygon points="1296.3,422.0 1310.6,420.0 1311.0,436.0 1314.3,545.0 1304.8,537.0 1301.9,438.5 1296.8,439.2" fill="none" stroke="#ffffff" stroke-width="1" /><clipPath id="hcolR"><polygon points="1358.8,414.0 1368.0,412.5 1373.0,537.0 1362.5,528.0"/></clipPath><path d="M1232.3 412.5l124.5 124.5M1242.8 412.5l124.5 124.5M1253.3 412.5l124.5 124.5M1263.8 412.5l124.5 124.5M1274.3 412.5l124.5 124.5M1284.8 412.5l124.5 124.5M1295.3 412.5l124.5 124.5M1305.8 412.5l124.5 124.5M1316.3 412.5l124.5 124.5M1326.8 412.5l124.5 124.5M1337.3 412.5l124.5 124.5M1347.8 412.5l124.5 124.5M1358.3 412.5l124.5 124.5M1368.8 412.5l124.5 124.5" stroke="#f0f000" stroke-width="1" fill="none" clip-path="url(#hcolR)"/><polygon points="1358.8,414.0 1368.0,412.5 1373.0,537.0 1362.5,528.0" fill="none" stroke="#ffffff" stroke-width="1" /><polyline points="1311.9,432.0 1315.0,545.0" fill="none" stroke="#ffffff" stroke-width="1" /><polyline points="1306.3,443.8 1363.8,435.6" fill="none" stroke="#d40000" stroke-width="1.2" /><polyline points="1312.0,440.4 1359.5,433.6" fill="none" stroke="#ffffff" stroke-width="1" /><polyline points="1312.3,445.6 1359.8,438.8" fill="none" stroke="#ffffff" stroke-width="1" /><polyline points="1306.3,475.0 1363.8,466.8" fill="none" stroke="#d40000" stroke-width="1.2" /><polyline points="1312.0,471.6 1359.5,464.8" fill="none" stroke="#ffffff" stroke-width="1" /><polyline points="1312.3,476.8 1359.8,470.0" fill="none" stroke="#ffffff" stroke-width="1" /><polyline points="1306.3,506.9 1363.8,498.7" fill="none" stroke="#d40000" stroke-width="1.2" /><polyline points="1312.0,503.5 1359.5,496.7" fill="none" stroke="#ffffff" stroke-width="1" /><polyline points="1312.3,508.7 1359.8,501.9" fill="none" stroke="#ffffff" stroke-width="1" /><polyline points="1312.0,431.0 1358.8,424.3" fill="none" stroke="#ffffff" stroke-width="1" /><polyline points="1309.0,538.5 1366.0,530.0" fill="none" stroke="#d40000" stroke-width="1.2" /><path d="M1316 536l50 -7.500M1316 540l52 -7.800M1340 527v12M1349 526v12M1357 525v12" fill="none" stroke="#fff" stroke-width="1"/>
<defs><linearGradient id="gPin" x1="0" y1="0" x2="0" y2="1"><stop offset="0" stop-color="#9aa09a"/><stop offset="1" stop-color="#4a4e4a"/></linearGradient></defs><g transform="rotate(-7 1356 549)"><rect x="1340" y="546.500" width="24" height="6.500" rx="3.200" fill="url(#gPin)" stroke="#222" stroke-width=".6"/><rect x="1359" y="544.500" width="13.500" height="9.500" rx="4.500" fill="url(#gPin)" stroke="#222" stroke-width=".6"/></g>
<polygon points="1252.4,491.0 1264.8,495.5 1270.6,649.4 1258.2,642.7" fill="#858c85" stroke="#000" stroke-width="0.9" /><path d="M1264.800 495.500L1291 488.500Q1299 487 1299.400 494L1305 633Q1305.300 640.500 1298 642L1270.600 649.400Z" fill="#5c625c" stroke="#000" stroke-width=".9"/><path d="M1252.400 491L1279 484.500Q1292 483 1297 488L1291 488.500L1264.800 495.500Z" fill="#7d847d" stroke="#000" stroke-width=".8"/><circle cx="1286.2" cy="514.3" r="13.500" fill="#8a918a" stroke="#000" stroke-width=".9"/><circle cx="1289.7" cy="514.8" r="12.600" fill="#4a4e4a" stroke="#000" stroke-width=".9"/><circle cx="1290.3" cy="514.8" r="11.200" fill="#5c625c" stroke="#1a1a1a" stroke-width=".8"/><circle cx="1290.0" cy="624.1" r="13.500" fill="#8a918a" stroke="#000" stroke-width=".9"/><circle cx="1293.5" cy="624.6" r="12.600" fill="#4a4e4a" stroke="#000" stroke-width=".9"/><circle cx="1294.1" cy="624.6" r="11.200" fill="#5c625c" stroke="#1a1a1a" stroke-width=".8"/>
<clipPath id="hlock"><polygon points="1269.6,554.9 1304.0,550.2 1304.9,576.9 1270.0,581.6"/></clipPath><path d="M1267.6 550.2l-31.4 31.4M1275.6 550.2l-31.4 31.4M1283.6 550.2l-31.4 31.4M1291.6 550.2l-31.4 31.4M1299.6 550.2l-31.4 31.4M1307.6 550.2l-31.4 31.4M1315.6 550.2l-31.4 31.4M1323.6 550.2l-31.4 31.4M1331.6 550.2l-31.4 31.4" stroke="#f0f000" stroke-width="1" fill="none" clip-path="url(#hlock)"/><polygon points="1269.6,554.9 1304.0,550.2 1304.9,576.9 1270.0,581.6" fill="none" stroke="#ffffff" stroke-width="1" />
<clipPath id="hsmall"><polygon points="906.8,605.0 942.5,600.0 943.5,628.0 907.8,633.0"/></clipPath><path d="M871.8 600.0l33.0 33.0M880.8 600.0l33.0 33.0M889.8 600.0l33.0 33.0M898.8 600.0l33.0 33.0M907.8 600.0l33.0 33.0M916.8 600.0l33.0 33.0M925.8 600.0l33.0 33.0M934.8 600.0l33.0 33.0M943.8 600.0l33.0 33.0" stroke="#f0f000" stroke-width="1" fill="none" clip-path="url(#hsmall)"/><polygon points="906.8,605.0 942.5,600.0 943.5,628.0 907.8,633.0" fill="none" stroke="#ffffff" stroke-width="1" />
<polygon points="994.0,556.5 1009.0,554.5 1010.0,581.5 995.0,584.0" fill="none" stroke="#18f040" stroke-width="1.3" /><polygon points="998.0,558.0 1007.0,556.5 1008.0,579.5 999.0,581.5" fill="none" stroke="#18f040" stroke-width="1.1" /><path d="M1002.0 559.5v22M1005.5 559.0v22" stroke="#18f040" stroke-width="1.2" stroke-dasharray="2 2.5"/><polygon points="991.0,558.0 997.0,557.0 998.0,582.0 992.0,583.0" fill="none" stroke="#8a8a8a" stroke-width="1.3" /><polyline points="989.0,572.3 1009.0,569.3" fill="none" stroke="#8a8a8a" stroke-width="1" /><path d="M984.0 569.0l-26 3.800a2.500 2.500 0 0 0 .7 5l26 -3.800M983.0 571.5l-22 3.200" fill="none" stroke="#18f040" stroke-width="1.2"/><ellipse cx="986.0" cy="571.0" rx="2.800" ry="6" fill="none" stroke="#18f040" stroke-width="1.2"/><path d="M986.0 567.5l5 -.7M986.0 574.5l5 -.7" stroke="#18f040" stroke-width="1.1"/><polygon points="1066.0,545.5 1081.0,543.5 1082.0,570.5 1067.0,573.0" fill="none" stroke="#18f040" stroke-width="1.3" /><polygon points="1070.0,547.0 1079.0,545.5 1080.0,568.5 1071.0,570.5" fill="none" stroke="#18f040" stroke-width="1.1" /><path d="M1074.0 548.5v22M1077.5 548.0v22" stroke="#18f040" stroke-width="1.2" stroke-dasharray="2 2.5"/><polygon points="1063.0,547.0 1069.0,546.0 1070.0,571.0 1064.0,572.0" fill="none" stroke="#8a8a8a" stroke-width="1.3" /><polyline points="1061.0,561.3 1081.0,558.3" fill="none" stroke="#8a8a8a" stroke-width="1" /><path d="M1056.0 558.0l-26 3.800a2.500 2.500 0 0 0 .7 5l26 -3.800M1055.0 560.5l-22 3.200" fill="none" stroke="#18f040" stroke-width="1.2"/><ellipse cx="1058.0" cy="560.0" rx="2.800" ry="6" fill="none" stroke="#18f040" stroke-width="1.2"/><path d="M1058.0 556.5l5 -.7M1058.0 563.5l5 -.7" stroke="#18f040" stroke-width="1.1"/><polygon points="1139.0,534.5 1154.0,532.5 1155.0,559.5 1140.0,562.0" fill="none" stroke="#18f040" stroke-width="1.3" /><polygon points="1143.0,536.0 1152.0,534.5 1153.0,557.5 1144.0,559.5" fill="none" stroke="#18f040" stroke-width="1.1" /><path d="M1147.0 537.5v22M1150.5 537.0v22" stroke="#18f040" stroke-width="1.2" stroke-dasharray="2 2.5"/><polygon points="1136.0,536.0 1142.0,535.0 1143.0,560.0 1137.0,561.0" fill="none" stroke="#8a8a8a" stroke-width="1.3" /><polyline points="1134.0,550.3 1154.0,547.3" fill="none" stroke="#8a8a8a" stroke-width="1" /><path d="M1129.0 547.0l-26 3.800a2.500 2.500 0 0 0 .7 5l26 -3.800M1128.0 549.5l-22 3.200" fill="none" stroke="#18f040" stroke-width="1.2"/><ellipse cx="1131.0" cy="549.0" rx="2.800" ry="6" fill="none" stroke="#18f040" stroke-width="1.2"/><path d="M1131.0 545.5l5 -.7M1131.0 552.5l5 -.7" stroke="#18f040" stroke-width="1.1"/><polygon points="1212.0,524.5 1227.0,522.5 1228.0,549.5 1213.0,552.0" fill="none" stroke="#18f040" stroke-width="1.3" /><polygon points="1216.0,526.0 1225.0,524.5 1226.0,547.5 1217.0,549.5" fill="none" stroke="#18f040" stroke-width="1.1" /><path d="M1220.0 527.5v22M1223.5 527.0v22" stroke="#18f040" stroke-width="1.2" stroke-dasharray="2 2.5"/><polygon points="1209.0,526.0 1215.0,525.0 1216.0,550.0 1210.0,551.0" fill="none" stroke="#8a8a8a" stroke-width="1.3" /><polyline points="1207.0,540.3 1227.0,537.3" fill="none" stroke="#8a8a8a" stroke-width="1" /><path d="M1202.0 537.0l-26 3.800a2.500 2.500 0 0 0 .7 5l26 -3.800M1201.0 539.5l-22 3.200" fill="none" stroke="#18f040" stroke-width="1.2"/><ellipse cx="1204.0" cy="539.0" rx="2.800" ry="6" fill="none" stroke="#18f040" stroke-width="1.2"/><path d="M1204.0 535.5l5 -.7M1204.0 542.5l5 -.7" stroke="#18f040" stroke-width="1.1"/>
<polygon points="1238.1,377.5 1272.5,372.6 1272.5,395.7 1238.1,400.6" fill="none" stroke="#ffffff" stroke-width="1.2" /><polygon points="1240.1,379.7 1270.5,375.4 1270.5,395.0 1240.1,399.3" fill="none" stroke="#ffffff" stroke-width="1" /><polyline points="1247.0,399.3 1249.0,460.7" fill="none" stroke="#7a20e0" stroke-width="1.2" /><polyline points="1266.5,396.6 1268.5,458.0" fill="none" stroke="#7a20e0" stroke-width="1.2" /><path d="M1249.0 460.7L1268.5 458.0M1249.0 463.7L1268.5 461.0M1249.0 460.7L1249.3 466.2L1259.2 476.5L1268.8 463.5L1268.5 458.0" fill="none" stroke="#fff" stroke-width="1"/><polyline points="1255.3,372.1 1259.2,477.5" fill="none" stroke="#d40000" stroke-width="1" />
<polygon points="910.4,606.7 931.4,603.7 931.4,616.3 910.4,619.3" fill="none" stroke="#ffffff" stroke-width="1.2" /><polygon points="912.4,608.9 929.4,606.5 929.4,615.6 912.4,618.0" fill="none" stroke="#ffffff" stroke-width="1" /><polyline points="916.2,618.5 917.2,649.5" fill="none" stroke="#7a20e0" stroke-width="1.2" /><polyline points="927.2,616.9 928.2,647.9" fill="none" stroke="#7a20e0" stroke-width="1.2" /><path d="M917.2 649.5L928.2 647.9M917.2 652.5L928.2 650.9M917.2 649.5L917.5 655.0L923.2 659.5L928.5 653.4L928.2 647.9" fill="none" stroke="#fff" stroke-width="1"/><polyline points="920.9,603.2 923.2,660.5" fill="none" stroke="#d40000" stroke-width="1" />
<polygon points="1279.2,554.0 1299.2,551.2 1299.2,564.5 1279.2,567.3" fill="none" stroke="#ffffff" stroke-width="1.2" /><polygon points="1281.2,556.2 1297.2,553.9 1297.2,563.7 1281.2,566.0" fill="none" stroke="#ffffff" stroke-width="1" /><polyline points="1284.9,566.5 1285.9,596.2" fill="none" stroke="#7a20e0" stroke-width="1.2" /><polyline points="1296.3,564.9 1297.3,594.6" fill="none" stroke="#7a20e0" stroke-width="1.2" /><path d="M1285.9 596.2L1297.3 594.6M1285.9 599.2L1297.3 597.6M1285.9 596.2L1286.2 601.7L1292.1 606.5L1297.6 600.1L1297.3 594.6" fill="none" stroke="#fff" stroke-width="1"/><polyline points="1289.2,549.6 1292.1,607.5" fill="none" stroke="#d40000" stroke-width="1" />
<polygon points="1190.0,258.5 1192.0,256.5 1206.3,262.7 1206.3,284.8 1201.0,282.5 1201.0,267.5 1195.5,265.3 1195.5,280.3 1190.6,278.1" fill="none" stroke="#ffffff" stroke-width="1.5" /><path d="M1191.2 262.5v16M1204.5 267.5v16" stroke="#f0f000" stroke-width="1.500" stroke-dasharray="2 3" fill="none"/><polyline points="1197.3,254.0 1197.8,281.0" fill="none" stroke="#d40000" stroke-width="1" /><polygon points="1273.8,291.0 1275.8,289.0 1290.1,295.2 1290.1,317.3 1284.8,315.0 1284.8,300.0 1279.3,297.8 1279.3,312.8 1274.4,310.6" fill="none" stroke="#ffffff" stroke-width="1.5" /><path d="M1275.0 295.0v16M1288.3 300.0v16" stroke="#f0f000" stroke-width="1.500" stroke-dasharray="2 3" fill="none"/><polyline points="1281.1,286.5 1281.6,313.5" fill="none" stroke="#d40000" stroke-width="1" /><polyline points="1206.3,264.8 1273.8,291.0" fill="none" stroke="#ffffff" stroke-width="1" /><polyline points="1238.5,248.0 1239.0,298.0" fill="none" stroke="#d40000" stroke-width="1" /><polyline points="1239.5,297.6 1249.0,297.6" fill="none" stroke="#d40000" stroke-width="1" /><polyline points="1141.5,253.0 1141.5,260.0" fill="none" stroke="#d40000" stroke-width="1" /><path d="M1366 428.500l9 2.500l1.500 32l-9.500 -3.500zM1371 430l.8 30M1377 427l6 2l1.500 36l-6 -2.500zM1380.500 428.500l1.500 35" fill="none" stroke="#fff" stroke-width="1"/><path d="M1372 645l10 3.500l1.500 38l-10 -4.500zM1373 657l10 4M1373 669l10 4.500M1385 651l6 2l1.500 37l-6 -2.500zM1388 652.500l1.300 35" fill="none" stroke="#fff" stroke-width="1"/><polyline points="1373.0,663.0 1388.0,668.0" fill="none" stroke="#d40000" stroke-width="1" />
<g transform="rotate(-7.5 496.8 375.0)"><path d="M496.8 353.0 L565.3 353.0 A9.8 22.0 0 0 1 565.3 397.0 L496.8 397.0 A9.8 22.0 0 0 0 496.8 353.0 Z" fill="url(#gCylG)" stroke="#000" stroke-width=".9"/><ellipse cx="496.8" cy="375.0" rx="9.8" ry="22.0" fill="#858c85" stroke="#000" stroke-width=".9" transform="rotate(3 496.8 375.0)"/><ellipse cx="496.8" cy="375.0" rx="5.9" ry="11.9" fill="url(#gHoleG)" stroke="#000" stroke-width=".9" transform="rotate(3 496.8 375.0)"/></g>
<g transform="rotate(-7.5 702.3 456.3)"><path d="M702.3 434.3 L770.8 434.3 A9.8 22.0 0 0 1 770.8 478.3 L702.3 478.3 A9.8 22.0 0 0 0 702.3 434.3 Z" fill="url(#gCylG)" stroke="#000" stroke-width=".9"/><ellipse cx="702.3" cy="456.3" rx="9.8" ry="22.0" fill="#858c85" stroke="#000" stroke-width=".9" transform="rotate(3 702.3 456.3)"/><ellipse cx="702.3" cy="456.3" rx="5.9" ry="11.9" fill="url(#gHoleG)" stroke="#000" stroke-width=".9" transform="rotate(3 702.3 456.3)"/></g>
<g transform="rotate(-7.5 508.2 743.6)"><path d="M508.2 721.6 L576.7 721.6 A9.8 22.0 0 0 1 576.7 765.6 L508.2 765.6 A9.8 22.0 0 0 0 508.2 721.6 Z" fill="url(#gCylG)" stroke="#000" stroke-width=".9"/><ellipse cx="508.2" cy="743.6" rx="9.8" ry="22.0" fill="#858c85" stroke="#000" stroke-width=".9" transform="rotate(3 508.2 743.6)"/><ellipse cx="508.2" cy="743.6" rx="5.9" ry="11.9" fill="url(#gHoleG)" stroke="#000" stroke-width=".9" transform="rotate(3 508.2 743.6)"/></g>
<g transform="rotate(-7.5 713.7 825.4)"><path d="M713.7 803.4 L782.2 803.4 A9.8 22.0 0 0 1 782.2 847.4 L713.7 847.4 A9.8 22.0 0 0 0 713.7 803.4 Z" fill="url(#gCylG)" stroke="#000" stroke-width=".9"/><ellipse cx="713.7" cy="825.4" rx="9.8" ry="22.0" fill="#858c85" stroke="#000" stroke-width=".9" transform="rotate(3 713.7 825.4)"/><ellipse cx="713.7" cy="825.4" rx="5.9" ry="11.9" fill="url(#gHoleG)" stroke="#000" stroke-width=".9" transform="rotate(3 713.7 825.4)"/></g>
<polygon points="516.3,350.6 571.3,342.5 588.8,350.0 533.8,358.1" fill="none" stroke="#ffffff" stroke-width="1" />
<polyline points="522.3,353.2 577.3,345.1" fill="none" stroke="#ffffff" stroke-width="1" />
<polyline points="520.3,356.6 600.3,345.0" fill="none" stroke="#d40000" stroke-width="1" />
<polygon points="683.8,416.9 738.8,408.8 756.3,416.3 701.3,424.4" fill="none" stroke="#ffffff" stroke-width="1" />
<polyline points="689.8,419.5 744.8,411.4" fill="none" stroke="#ffffff" stroke-width="1" />
<polyline points="687.8,422.9 767.8,411.3" fill="none" stroke="#d40000" stroke-width="1" />
<g transform="translate(0.0,0.0)"><clipPath id="hb1u"><polygon points="755.6,455.5 758.0,452.8 812.3,443.1 812.8,457.0 769.4,463.1 768.8,458.1 758.1,460.0 757.0,461.0"/></clipPath><path d="M733.6 443.1l20.0 20.0M741.6 443.1l20.0 20.0M749.6 443.1l20.0 20.0M757.6 443.1l20.0 20.0M765.6 443.1l20.0 20.0M773.6 443.1l20.0 20.0M781.6 443.1l20.0 20.0M789.6 443.1l20.0 20.0M797.6 443.1l20.0 20.0M805.6 443.1l20.0 20.0M813.6 443.1l20.0 20.0" stroke="#f0f000" stroke-width="1" fill="none" clip-path="url(#hb1u)"/><clipPath id="hb1l"><polygon points="770.0,476.9 813.4,470.8 813.8,483.8 759.0,492.8 756.3,490.0 756.3,484.0 769.4,481.9"/></clipPath><path d="M732.3 470.8l22.0 22.0M740.3 470.8l22.0 22.0M748.3 470.8l22.0 22.0M756.3 470.8l22.0 22.0M764.3 470.8l22.0 22.0M772.3 470.8l22.0 22.0M780.3 470.8l22.0 22.0M788.3 470.8l22.0 22.0M796.3 470.8l22.0 22.0M804.3 470.8l22.0 22.0M812.3 470.8l22.0 22.0" stroke="#f0f000" stroke-width="1" fill="none" clip-path="url(#hb1l)"/><polygon points="769.4,463.1 836.3,453.8 843.8,459.5 837.5,467.5 770.0,476.9" fill="rgba(40,110,40,.0)" stroke="none" stroke-width="1.0" /><polygon points="755.6,455.5 758.0,452.8 812.3,443.1 813.8,483.8 759.0,492.8 756.3,490.0" fill="none" stroke="#ffffff" stroke-width="1" /><polygon points="758.1,460.0 768.8,458.1 769.4,481.9 758.8,483.8" fill="none" stroke="#ffffff" stroke-width="1.2" /><polygon points="760.2,463.0 766.8,461.8 767.2,478.5 760.7,479.8" fill="none" stroke="#ffffff" stroke-width="1" /><polyline points="769.4,463.1 836.3,453.8" fill="none" stroke="#ffffff" stroke-width="1.2" /><polyline points="770.0,476.9 837.5,467.5" fill="none" stroke="#ffffff" stroke-width="1.2" /><polyline points="790.0,460.2 836.3,453.8" fill="none" stroke="#1840c0" stroke-width="1.2" /><polyline points="790.6,474.0 837.5,467.5" fill="none" stroke="#1840c0" stroke-width="1.2" /><polyline points="790.0,459.5 790.6,474.5" fill="none" stroke="#ffffff" stroke-width="1" /><path d="M836.300 453.800v13.700M839 453.500v13.700M836.300 453.800l4 -.5l3.500 5l-2.500 8l-3.800 1.200" fill="none" stroke="#fff" stroke-width="1"/><polyline points="750.6,473.5 850.0,459.0" fill="none" stroke="#d40000" stroke-width="1" /></g>
<g transform="translate(12.3,368.0)"><clipPath id="hb2u"><polygon points="755.6,455.5 758.0,452.8 812.3,443.1 812.8,457.0 769.4,463.1 768.8,458.1 758.1,460.0 757.0,461.0"/></clipPath><path d="M733.6 443.1l20.0 20.0M741.6 443.1l20.0 20.0M749.6 443.1l20.0 20.0M757.6 443.1l20.0 20.0M765.6 443.1l20.0 20.0M773.6 443.1l20.0 20.0M781.6 443.1l20.0 20.0M789.6 443.1l20.0 20.0M797.6 443.1l20.0 20.0M805.6 443.1l20.0 20.0M813.6 443.1l20.0 20.0" stroke="#f0f000" stroke-width="1" fill="none" clip-path="url(#hb2u)"/><clipPath id="hb2l"><polygon points="770.0,476.9 813.4,470.8 813.8,483.8 759.0,492.8 756.3,490.0 756.3,484.0 769.4,481.9"/></clipPath><path d="M732.3 470.8l22.0 22.0M740.3 470.8l22.0 22.0M748.3 470.8l22.0 22.0M756.3 470.8l22.0 22.0M764.3 470.8l22.0 22.0M772.3 470.8l22.0 22.0M780.3 470.8l22.0 22.0M788.3 470.8l22.0 22.0M796.3 470.8l22.0 22.0M804.3 470.8l22.0 22.0M812.3 470.8l22.0 22.0" stroke="#f0f000" stroke-width="1" fill="none" clip-path="url(#hb2l)"/><polygon points="769.4,463.1 836.3,453.8 843.8,459.5 837.5,467.5 770.0,476.9" fill="rgba(40,110,40,.0)" stroke="none" stroke-width="1.0" /><polygon points="755.6,455.5 758.0,452.8 812.3,443.1 813.8,483.8 759.0,492.8 756.3,490.0" fill="none" stroke="#ffffff" stroke-width="1" /><polygon points="758.1,460.0 768.8,458.1 769.4,481.9 758.8,483.8" fill="none" stroke="#ffffff" stroke-width="1.2" /><polygon points="760.2,463.0 766.8,461.8 767.2,478.5 760.7,479.8" fill="none" stroke="#ffffff" stroke-width="1" /><polyline points="769.4,463.1 836.3,453.8" fill="none" stroke="#ffffff" stroke-width="1.2" /><polyline points="770.0,476.9 837.5,467.5" fill="none" stroke="#ffffff" stroke-width="1.2" /><polyline points="790.0,460.2 836.3,453.8" fill="none" stroke="#1840c0" stroke-width="1.2" /><polyline points="790.6,474.0 837.5,467.5" fill="none" stroke="#1840c0" stroke-width="1.2" /><polyline points="790.0,459.5 790.6,474.5" fill="none" stroke="#ffffff" stroke-width="1" /><path d="M836.300 453.800v13.700M839 453.500v13.700M836.300 453.800l4 -.5l3.500 5l-2.500 8l-3.800 1.200" fill="none" stroke="#fff" stroke-width="1"/><polyline points="750.6,473.5 850.0,459.0" fill="none" stroke="#d40000" stroke-width="1" /></g>
<path d="M1255.500 628l.5 -10l7 -7l8 5.500l1 10M1255.700 622l16.300 -2.500M1255.600 625l16.400 -2.500M1256 618l15 -2" fill="none" stroke="#fff" stroke-width="1"/><polyline points="1254.4,628.0 1256.2,680.0" fill="none" stroke="#7a20e0" stroke-width="1.2" /><polyline points="1273.2,626.0 1274.3,678.0" fill="none" stroke="#7a20e0" stroke-width="1.2" /><polyline points="1256.2,680.0 1274.3,677.5" fill="none" stroke="#ffffff" stroke-width="1" /><polyline points="1256.2,680.0 1258.9,774.0" fill="none" stroke="#ffffff" stroke-width="1" /><polyline points="1274.3,678.0 1277.9,772.3" fill="none" stroke="#ffffff" stroke-width="1" /><polygon points="1251.7,775.0 1285.2,771.4 1287.0,792.2 1252.6,798.5" fill="none" stroke="#ffffff" stroke-width="1" /><polygon points="1253.7,777.5 1283.5,774.0 1285.0,790.0 1254.5,795.5" fill="none" stroke="#ffffff" stroke-width="1" /><polyline points="1254.0,797.0 1286.0,793.5" fill="none" stroke="#ffffff" stroke-width="1" /><polyline points="1263.0,606.0 1268.5,796.0" fill="none" stroke="#d40000" stroke-width="1" />
<polygon points="530.0,771.0 585.0,762.9 602.5,770.4 547.5,778.5" fill="none" stroke="#ffffff" stroke-width="1" /><polyline points="536.0,773.6 591.0,765.5" fill="none" stroke="#ffffff" stroke-width="1" /><polyline points="534.0,777.0 596.0,767.8" fill="none" stroke="#d40000" stroke-width="1" /><polyline points="693.0,837.0 708.0,843.0 718.0,841.5" fill="none" stroke="#ffffff" stroke-width="1" /><polyline points="698.0,836.0 710.0,841.0" fill="none" stroke="#ffffff" stroke-width="1" /><polyline points="701.0,842.0 714.0,840.0" fill="none" stroke="#d40000" stroke-width="1" /><polyline points="670.0,802.6 678.5,801.4" fill="none" stroke="#d40000" stroke-width="1" />
<path d="M119.500 921l10 -4.500h11.500l1.500 .5v23.500l-11 3.500h-12z" fill="rgba(150,165,200,.45)" stroke="#d8d8d8" stroke-width="1"/><path d="M119.500 921c8 1 11 4 11 9v13" fill="none" stroke="#d8d8d8" stroke-width="1"/><path d="M121 941l28 -3l6 3.500l-28 2.500z" fill="rgba(200,200,60,.55)" stroke="#e8e820" stroke-width="1"/><path d="M118 877v62" stroke="#10d8e0" stroke-width="2.600"/><path d="M118 867l-4 11h8z" fill="#20e8f0"/><path d="M121 941l36 -4.500" stroke="#20c020" stroke-width="2.400"/><path d="M165 935.500l-10 -3l1 7z" fill="#18a818"/><path d="M155.500 932.500l1 7" stroke="#20e020" stroke-width="2.500"/><path d="M120 942l12 4.500" stroke="#e01010" stroke-width="3"/><path d="M136 947.500l-7 -5.500l-1.500 8z" fill="#e01010"/><circle cx="131" cy="947" r="3" fill="#e01818"/><circle cx="119" cy="942" r="3.600" fill="#8a8a8a"/><circle cx="118" cy="941" r="1.500" fill="#bbb"/><text x="112.500" y="866" font-family="Liberation Sans,sans-serif" font-size="12" fill="#d8d8d8">Z</text><text x="166" y="940" font-family="Liberation Sans,sans-serif" font-size="12" fill="#f01010">Y</text><text x="135" y="955" font-family="Liberation Sans,sans-serif" font-size="11" fill="#d8d8d8">X</text>
</g>
<rect x="64" y="113" width="24" height="24" fill="#82859b"/>
<g transform="translate(76.0,125.0) scale(1.0)"><rect x="-9" y="-8" width="18" height="4" rx="1" fill="#4a6490"/><rect x="-9" y="-2" width="18" height="4" rx="1" fill="#4a6490"/><rect x="-9" y="4" width="18" height="4" rx="1" fill="#4a6490"/></g>
<rect x="92" y="113" width="24" height="24" fill="#82859b"/>
<g transform="translate(104.0,125.0) scale(1.0)"><rect x="-5.500" y="-4.500" width="11" height="9" fill="url(#gDoc)" stroke="#777c90" stroke-width="1"/><path d="M-9 -9l3 3M-9 -9h3M-9 -9v3" stroke="#48c828" stroke-width="1.300" fill="none"/><path d="M9 -9l-3 3M9 -9h-3M9 -9v3" stroke="#48c828" stroke-width="1.300" fill="none"/><path d="M-9 9l3 -3M-9 9h3M-9 9v-3" stroke="#48c828" stroke-width="1.300" fill="none"/><path d="M9 9l-3 -3M9 9h-3M9 9v-3" stroke="#48c828" stroke-width="1.300" fill="none"/></g>
<rect x="120" y="113" width="24" height="24" fill="#82859b"/>
<g transform="translate(132.0,125.0) scale(1.0)"><path d="M-7 -7l4 1M-8 -3l3 .5M-7 1l3 -.5" stroke="#a8b8d0" stroke-width="1.400"/><g transform="translate(2,-2)"><path d="M-3.5 3.5l-5 5" stroke="#b4b4b4" stroke-width="2.600" stroke-linecap="round"/><circle r="5.0" fill="url(#gLens)" stroke="#7a9ccc" stroke-width="1.200"/></g></g>
<rect x="148" y="113" width="24" height="24" fill="#82859b"/>
<g transform="translate(160.0,125.0) scale(1.0)"><g transform="translate(0,1) scale(1.0)"><path d="M-9 2l9 -5l9 5l-9 5z" fill="#e8ecf4" stroke="#9aa" stroke-width=".6"/><path d="M-1 2v-9" stroke="#2060e0" stroke-width="1.600"/><path d="M-1 -10l-2.500 4h5z" fill="#2060e0"/><path d="M-1 2l6 -4" stroke="#28b030" stroke-width="1.600"/><path d="M7.500 -3.500l-4 .5l2 3z" fill="#28b030"/><path d="M-1 2l6 5" stroke="#e02020" stroke-width="1.600"/><path d="M7.500 9l-4 -1l2.500 -2.500z" fill="#e02020"/><circle cx="-1" cy="2" r="1.300" fill="#ddd" stroke="#555" stroke-width=".4"/></g></g>
<rect x="176" y="113" width="24" height="24" fill="#82859b"/>
<g transform="translate(188.0,125.0) scale(1.0)"><path d="M0 -9l9 4v9l-9 5l-9 -5v-9zM-9 -5l9 3.500l9 -3.500M0 -1.500v10.500M0 -9v10.500M0 1.500l-9 2.500M0 1.500l9 2.500" fill="none" stroke="#0a0a0a" stroke-width="1.300" stroke-linejoin="round"/><polygon points="0.0,-9.0 9.0,-5.0 0.0,-1.5 -9.0,-5.0" fill="#48d838" stroke="#0a0a0a" stroke-width="1.300" stroke-linejoin="round"/></g>
<rect x="204" y="113" width="24" height="24" fill="#82859b"/>
<g transform="translate(216.0,125.0) scale(1.0)"><polygon points="-9.0,4.0 0.0,1.5 9.0,4.0 0.0,9.0" fill="#38c828"/><path d="M0 -9l9 4v9l-9 5l-9 -5v-9zM-9 -5l9 3.500l9 -3.500M0 -1.500v10.500M0 -9v10.500M0 1.500l-9 2.500M0 1.500l9 2.500" fill="none" stroke="#0a0a0a" stroke-width="1.300" stroke-linejoin="round"/></g>
<rect x="232" y="113" width="24" height="24" fill="#82859b"/>
<g transform="translate(244.0,125.0) scale(1.0)"><polygon points="-9.0,-5.0 0.0,-9.0 0.0,1.5 -9.0,4.0" fill="#38c828"/><path d="M0 -9l9 4v9l-9 5l-9 -5v-9zM-9 -5l9 3.500l9 -3.500M0 -1.500v10.500M0 -9v10.500M0 1.500l-9 2.500M0 1.500l9 2.500" fill="none" stroke="#0a0a0a" stroke-width="1.300" stroke-linejoin="round"/></g>
<rect x="260" y="113" width="24" height="24" fill="#82859b"/>
<g transform="translate(272.0,125.0) scale(1.0)"><path d="M0 -9l9 4v9l-9 5l-9 -5v-9zM-9 -5l9 3.500l9 -3.500M0 -1.500v10.500M0 -9v10.500M0 1.500l-9 2.500M0 1.500l9 2.500" fill="none" stroke="#0a0a0a" stroke-width="1.300" stroke-linejoin="round"/><polygon points="0.0,-1.5 9.0,-5.0 9.0,4.0 0.0,9.0" fill="#48d838" stroke="#0a0a0a" stroke-width="1.300" stroke-linejoin="round"/></g>
<rect x="288" y="113" width="24" height="24" fill="#82859b"/>
<g transform="translate(300.0,125.0) scale(1.0)"><path d="M0 -9l9 4v9l-9 5l-9 -5v-9zM-9 -5l9 3.500l9 -3.500M0 -1.500v10.500M0 -9v10.500M0 1.500l-9 2.500M0 1.500l9 2.500" fill="none" stroke="#0a0a0a" stroke-width="1.300" stroke-linejoin="round"/><polygon points="-9.0,-5.0 0.0,-1.5 0.0,9.0 -9.0,4.0" fill="#48d838" stroke="#0a0a0a" stroke-width="1.300" stroke-linejoin="round"/></g>
<rect x="316" y="113" width="24" height="24" fill="#82859b"/>
<g transform="translate(328.0,125.0) scale(1.0)"><polygon points="0.0,-9.0 9.0,-5.0 9.0,4.0 0.0,1.5" fill="#38c828"/><path d="M0 -9l9 4v9l-9 5l-9 -5v-9zM-9 -5l9 3.500l9 -3.500M0 -1.500v10.500M0 -9v10.500M0 1.500l-9 2.500M0 1.500l9 2.500" fill="none" stroke="#0a0a0a" stroke-width="1.300" stroke-linejoin="round"/></g>
<rect x="344" y="113" width="24" height="24" fill="#82859b"/>
<g transform="translate(356.0,125.0) scale(1.0)"><polygon points="0,-9 9,-5 0,-1.5 -9,-5" fill="#58e048"/><polygon points="-9,-5 0,-1.5 0,9 -9,4" fill="#30c020"/><polygon points="0,-1.5 9,-5 9,4 0,9" fill="#3cc828"/><path d="M0 -9l9 4v9l-9 5l-9 -5v-9zM-9 -5l9 3.500l9 -3.500M0 -1.500v10.500" fill="none" stroke="#1c8a10" stroke-width="1"/></g>
<rect x="64" y="141" width="24" height="24" fill="#82859b"/>
<g transform="translate(76.0,153.0) scale(1.1)"><g transform="translate(0,0)"><path d="M-5.0 -6.0v12.0a5.0 1.9 0 0 0 10.0 0v-12.0" fill="none" stroke="#222" stroke-width="1.0"/><ellipse cx="0" cy="-6.0" rx="5.0" ry="1.9" fill="none" stroke="#222" stroke-width="1.0"/><path d="M-5.0 6.0a5.0 1.9 0 0 1 10.0 0" fill="none" stroke="#222" stroke-width="0.7" opacity=".6"/></g></g>
<rect x="64" y="169" width="24" height="24" fill="#82859b"/>
<g transform="translate(76.0,181.0) scale(1.1)"><g transform="translate(0,0)"><path d="M-5.0 -6.0v12.0a5.0 1.9 0 0 0 10.0 0v-12.0" fill="none" stroke="#222" stroke-width="1.0"/><ellipse cx="0" cy="-6.0" rx="5.0" ry="1.9" fill="none" stroke="#222" stroke-width="1.0"/></g></g>
<rect x="64.500" y="197.5" width="23" height="23" fill="#a09460" stroke="#f0d070" stroke-width="1.200"/>
<g transform="translate(76.0,209.0) scale(1.1)"><ellipse cx="3" cy="7" rx="6" ry="1.5" fill="rgba(0,0,0,.25)"/><g transform="translate(0,0)"><path d="M-5.0 -6.0v12.0a5.0 1.9 0 0 0 10.0 0v-12.0" fill="url(#gBlue)" stroke="#0c1020" stroke-width="1.1"/><ellipse cx="0" cy="-6.0" rx="5.0" ry="1.9" fill="#4a70c0" stroke="#0c1020" stroke-width="1.1"/></g></g>
<rect x="64" y="225" width="24" height="24" fill="#82859b"/>
<g transform="translate(76.0,237.0) scale(1.1)"><ellipse cx="3" cy="7" rx="6" ry="1.5" fill="rgba(0,0,0,.25)"/><g transform="translate(0,0)"><path d="M-5.0 -6.0v12.0a5.0 1.9 0 0 0 10.0 0v-12.0" fill="url(#gBlueL)" stroke="#444c60" stroke-width="1.0"/><ellipse cx="0" cy="-6.0" rx="5.0" ry="1.9" fill="#e8f0fc" stroke="#444c60" stroke-width="1.0"/><path d="M-5.0 6.0a5.0 1.9 0 0 1 10.0 0" fill="none" stroke="#444c60" stroke-width="0.7" opacity=".6"/></g></g>
<rect x="64" y="253" width="24" height="24" fill="#82859b"/>
<g transform="translate(76.0,265.0) scale(1.1)"><g transform="translate(0,0)"><path d="M-5.0 -6.0v12.0a5.0 1.9 0 0 0 10.0 0v-12.0" fill="none" stroke="#222" stroke-width="1.0"/><ellipse cx="0" cy="-6.0" rx="5.0" ry="1.9" fill="none" stroke="#222" stroke-width="1.0"/></g><path d="M-3 -6l2 13M0 -5l-2 12M3 -6l-1 13M1 -5l3 11M-4 0l3 -5" stroke="#333" stroke-width=".6" fill="none"/></g>
<g transform="translate(10.0,11.5)"><rect x="-8" y="-8" width="16" height="16" fill="#6ab82f"/><path d="M-4.5 -3.5L-0.5 4.5L4.5 -4.5" stroke="#fff" stroke-width="2.4" fill="none" stroke-linejoin="round"/><circle cx="-3.6" cy="-4.6" r="1.2" fill="#fff"/></g>
<path d="M20.500 6v13M312.500 6v13" stroke="#8a8a8a" stroke-width="1"/>
<g transform="translate(40.0,12.0) scale(1.05)"><path d="M-6.5 -7.5h8l5 5v10h-13z" fill="url(#gDoc)" stroke="#000" stroke-width="1.2"/><path d="M1.5 -7.5v5h5" fill="#fff" stroke="#000" stroke-width="1"/></g>
<g transform="translate(64.0,12.0) scale(1.05)"><g transform="translate(-1,1) scale(1.0)"><path d="M-8 -5l2 -2h5l1 2h6v3h-14z" fill="#f3d26a" stroke="#c9a23a" stroke-width=".6"/><path d="M-9 7l2.5 -9h15.5l-3 9z" fill="url(#gFold)" stroke="#d2a63c" stroke-width=".7"/></g><path d="M-3 -3c1 -5 6 -6 8 -3l2 -2l1 7l-7 -1l2 -2c-1.5 -2 -4 -1 -4 2z" fill="#2fae32" stroke="#157a18" stroke-width=".5"/></g>
<g transform="translate(88.0,12.0) scale(1.05)"><g transform="translate(-4,-4) scale(0.55)"><path d="M-8 -5l2 -2h5l1 2h6v3h-14z" fill="#f3d26a" stroke="#c9a23a" stroke-width=".6"/><path d="M-9 7l2.5 -9h15.5l-3 9z" fill="url(#gFold)" stroke="#d2a63c" stroke-width=".7"/></g><g transform="translate(-4,4) scale(0.55)"><path d="M-8 -5l2 -2h5l1 2h6v3h-14z" fill="#f3d26a" stroke="#c9a23a" stroke-width=".6"/><path d="M-9 7l2.5 -9h15.5l-3 9z" fill="url(#gFold)" stroke="#d2a63c" stroke-width=".7"/></g><path d="M0 -7h6v15h-6" fill="none" stroke="#5ec45e" stroke-width="1"/><path d="M1 -4h5l3 3v8h-8z" fill="url(#gDoc)" stroke="#222" stroke-width=".9"/></g>
<g transform="translate(111.0,12.0) scale(1.05)"><g transform="translate(0,0) scale(1.0)"><rect x="-8" y="-8" width="16" height="16" rx="1" fill="#4a6fb8" stroke="#2d4a8a" stroke-width=".8"/><rect x="-6" y="-8" width="12" height="9" fill="#f4f4f4"/><rect x="-6" y="-8" width="12" height="2" fill="#e04a3a"/><path d="M-5 -4h10M-5 -2h10" stroke="#b8b8b8" stroke-width=".8"/><rect x="-4" y="3" width="8" height="5" fill="#d0d0d0"/><rect x="-3" y="3.5" width="2.5" height="4" fill="#3a3a3a"/></g></g>
<g transform="translate(135.0,12.0) scale(1.05)"><g transform="translate(3,-3) scale(0.7)"><rect x="-8" y="-8" width="16" height="16" rx="1" fill="#4a6fb8" stroke="#2d4a8a" stroke-width=".8"/><rect x="-6" y="-8" width="12" height="9" fill="#f4f4f4"/><rect x="-6" y="-8" width="12" height="2" fill="#e04a3a"/><path d="M-5 -4h10M-5 -2h10" stroke="#b8b8b8" stroke-width=".8"/><rect x="-4" y="3" width="8" height="5" fill="#d0d0d0"/><rect x="-3" y="3.5" width="2.5" height="4" fill="#3a3a3a"/></g><g transform="translate(-2.5,3) scale(0.7)"><rect x="-8" y="-8" width="16" height="16" rx="1" fill="#4a6fb8" stroke="#2d4a8a" stroke-width=".8"/><rect x="-6" y="-8" width="12" height="9" fill="#f4f4f4"/><rect x="-6" y="-8" width="12" height="2" fill="#e04a3a"/><path d="M-5 -4h10M-5 -2h10" stroke="#b8b8b8" stroke-width=".8"/><rect x="-4" y="3" width="8" height="5" fill="#d0d0d0"/><rect x="-3" y="3.5" width="2.5" height="4" fill="#3a3a3a"/></g></g>
<g transform="translate(160.0,12.0) scale(1.05)"><g transform="translate(-4,-4) scale(0.65)"><rect x="-8" y="-8" width="16" height="16" rx="1" fill="#4a6fb8" stroke="#2d4a8a" stroke-width=".8"/><rect x="-6" y="-8" width="12" height="9" fill="#f4f4f4"/><rect x="-6" y="-8" width="12" height="2" fill="#e04a3a"/><path d="M-5 -4h10M-5 -2h10" stroke="#b8b8b8" stroke-width=".8"/><rect x="-4" y="3" width="8" height="5" fill="#d0d0d0"/><rect x="-3" y="3.5" width="2.5" height="4" fill="#3a3a3a"/></g><g transform="translate(4,5) scale(0.85)"><path d="M-6 -3l6 -3l6 3v7l-6 3l-6 -3z" fill="#8a8a86" stroke="#444" stroke-width=".6"/><path d="M-6 -3l6 3l6 -3l-6 -3z" fill="#c8c8c4" stroke="#444" stroke-width=".5"/><path d="M0 0v7l6 -3v-7z" fill="#6a6a66"/></g><path d="M2 -5c1 -4 6 -4 6 0c0 2 -1 3 -3 3" fill="none" stroke="#2fae32" stroke-width="1.8"/><path d="M0 -5l3 -4l2 4z" fill="#2fae32"/></g>
<g transform="translate(184.0,12.0) scale(1.05)"><rect x="-5" y="-8" width="10" height="8" fill="#c6d8f6" stroke="#56688c" stroke-width=".7"/><path d="M0 -8l-3.5 4h2v2h3v-2h2z" fill="#22c02a"/><path d="M-8 0l2 -2h12l2 2v6h-16z" fill="#ececec" stroke="#6a6a6a" stroke-width=".7"/><rect x="-7" y="2" width="14" height="2.2" fill="#fff" stroke="#999" stroke-width=".4"/><rect x="-8" y="6" width="16" height="2" fill="#8a8a8a"/></g>
<g transform="translate(207.0,12.0) scale(1.05)"><circle r="9.5" fill="#5a9a3a" stroke="#3f7426" stroke-width=".8"/><g transform="translate(-1,-1)"><path d="M3.8 3.8l5 5" stroke="#b4b4b4" stroke-width="2.600" stroke-linecap="round"/><circle r="5.5" fill="url(#gLens)" stroke="#7a9ccc" stroke-width="1.200"/></g></g>
<g transform="translate(232.0,12.0) scale(1.05)"><ellipse cx="1" cy="8" rx="7" ry="1.6" fill="rgba(0,0,0,.18)"/><path d="M-8 -3l7 -6v4c6 0 8 4 8 8c0 3 -2 5 -4 5c2 -2 2 -6 -4 -6v4z" fill="#a0a0a0" stroke="#777" stroke-width=".5"/></g>
<g transform="translate(255.0,12.0) scale(1.05)"><g transform="scale(-1,1)"><ellipse cx="1" cy="8" rx="7" ry="1.6" fill="rgba(0,0,0,.18)"/><path d="M-8 -3l7 -6v4c6 0 8 4 8 8c0 3 -2 5 -4 5c2 -2 2 -6 -4 -6v4z" fill="#a0a0a0" stroke="#777" stroke-width=".5"/></g></g>
<g transform="translate(279.0,12.0) scale(1.05)"><g transform="translate(2,0)"><ellipse cx="1" cy="8" rx="7" ry="1.6" fill="rgba(0,0,0,.18)"/><path d="M-8 -3l7 -6v4c6 0 8 4 8 8c0 3 -2 5 -4 5c2 -2 2 -6 -4 -6v4z" fill="#5d92d8" stroke="#3a6cb4" stroke-width=".5"/></g><path d="M-9 0h6l-2 4l2 4.500h-6l2 -4.500z" fill="#c8a44a" stroke="#6a5210" stroke-width=".8"/></g>
<g transform="translate(298.5,12.0)"><path d="M-3.500 -3.500h7" stroke="#000" stroke-width="1.100"/><path d="M-3.500 -0.500h7l-3.500 3.500z" fill="#000"/></g>
<rect x="401" y="66" width="24" height="24" fill="#fce27c" stroke="#e8c050" stroke-width="1"/>
<g transform="translate(33.0,78.0) scale(1.08)"><path d="M-8 -7h9l2 2h-11z M-8 -4h11v2.500h-11z M-8 -1h11v2h-11z" fill="#8c9cd8" stroke="#5060a0" stroke-width=".4"/><ellipse cx="0" cy="5" rx="8" ry="4.500" fill="#c89870" stroke="#6a4020" stroke-width=".7"/><circle cx="-3.500" cy="5.500" r="1.700" fill="#1848e0"/><circle cx="0.500" cy="6.500" r="1.700" fill="#18b828"/><circle cx="4" cy="4" r="1.700" fill="#e02020"/><path d="M8 -8l-6 10" stroke="#b06a28" stroke-width="1.800"/><path d="M2.800 0.500l-1.200 2.500" stroke="#555" stroke-width="2"/></g>
<g transform="translate(58.0,78.0) scale(1.08)"><path d="M-2 -8h7l3 3v9h-10z" fill="url(#gDoc)" stroke="#1c2440" stroke-width="1"/><path d="M-7 -5h7l3 3v8h-10z" fill="url(#gDoc)" stroke="#1c2440" stroke-width="1"/><g transform="translate(-1,5)"><path d="M-9 2c3 -6 13 -7 18 -1c-5 3 -12 4 -18 1z" fill="#a8b0cc"/><path d="M-9 2c3 -6 13 -7 18 -1" fill="none" stroke="#39435e" stroke-width="1.3"/><path d="M-7 -2l-1 -2M-3 -4l-.5 -2M1 -4.500v-2M5 -3.500l1 -2M8 -1.500l1.500 -1.500" stroke="#39435e" stroke-width=".7"/><circle cx="0" cy="0" r="3" fill="#3c4c7c"/><circle cx="0" cy="0" r="1.300" fill="#10182c"/></g></g>
<g transform="translate(84.0,78.0) scale(1.08)"><g transform="translate(0,-4)"><path d="M-9 2c3 -6 13 -7 18 -1c-5 3 -12 4 -18 1z" fill="#a8b0cc"/><path d="M-9 2c3 -6 13 -7 18 -1" fill="none" stroke="#39435e" stroke-width="1.3"/><path d="M-7 -2l-1 -2M-3 -4l-.5 -2M1 -4.500v-2M5 -3.500l1 -2M8 -1.500l1.500 -1.500" stroke="#39435e" stroke-width=".7"/><circle cx="0" cy="0" r="3" fill="#3c4c7c"/><circle cx="0" cy="0" r="1.300" fill="#10182c"/></g><path d="M-8.5 4.0h7.0M-5.0 0.5v7.0" stroke="#58d02c" stroke-width="2.0"/><g transform="translate(5,5)"><path d="M-3.500 -1.500l5 5c3 -1 3 -5 0 -5.500" fill="none" stroke="#3a78cc" stroke-width="1.600"/><path d="M-4.500 -2.500l4 0l-4 4z" fill="#3a78cc"/></g></g>
<g transform="translate(110.0,78.0) scale(1.08)"><g transform="translate(0,-4)"><path d="M-9 2c3 -6 13 -7 18 -1c-5 3 -12 4 -18 1z" fill="#a8b0cc"/><path d="M-9 2c3 -6 13 -7 18 -1" fill="none" stroke="#39435e" stroke-width="1.3"/><path d="M-7 -2l-1 -2M-3 -4l-.5 -2M1 -4.500v-2M5 -3.500l1 -2M8 -1.500l1.500 -1.500" stroke="#39435e" stroke-width=".7"/><circle cx="0" cy="0" r="3" fill="#3c4c7c"/><circle cx="0" cy="0" r="1.300" fill="#10182c"/></g><path d="M-9.0 4.0h8.0" stroke="#e8e000" stroke-width="2.2"/><path d="M-9.0 5.1h8.0" stroke="#a09a00" stroke-width=".5"/><g transform="translate(5,5)"><path d="M-3.500 -1.500l5 5c3 -1 3 -5 0 -5.500" fill="none" stroke="#3a78cc" stroke-width="1.600"/><path d="M-4.500 -2.500l4 0l-4 4z" fill="#3a78cc"/></g></g>
<g transform="translate(136.0,78.0) scale(1.08)"><g transform="translate(0,-5)"><path d="M-9 2c3 -6 13 -7 18 -1c-5 3 -12 4 -18 1z" fill="#a8b0cc"/><path d="M-9 2c3 -6 13 -7 18 -1" fill="none" stroke="#39435e" stroke-width="1.3"/><path d="M-7 -2l-1 -2M-3 -4l-.5 -2M1 -4.500v-2M5 -3.500l1 -2M8 -1.500l1.500 -1.500" stroke="#39435e" stroke-width=".7"/><circle cx="0" cy="0" r="3" fill="#3c4c7c"/><circle cx="0" cy="0" r="1.300" fill="#10182c"/></g><g transform="translate(-5,3)"><rect x="-2.800" y="-6" width="5.600" height="12" rx="1.500" fill="#111"/><circle cy="-2.800" r="2" fill="#f0c010"/><circle cy="2.800" r="2" fill="#20d020"/></g><g transform="translate(5,3)"><rect x="-2.800" y="-6" width="5.600" height="12" rx="1.500" fill="#111"/><circle cy="-2.800" r="2" fill="#e81818"/><circle cy="2.800" r="2" fill="#f0c010"/></g></g>
<g transform="translate(162.0,78.0) scale(1.08)"><g transform="translate(0,-5)"><path d="M-9 2c3 -6 13 -7 18 -1c-5 3 -12 4 -18 1z" fill="#a8b0cc"/><path d="M-9 2c3 -6 13 -7 18 -1" fill="none" stroke="#39435e" stroke-width="1.3"/><path d="M-7 -2l-1 -2M-3 -4l-.5 -2M1 -4.500v-2M5 -3.500l1 -2M8 -1.500l1.500 -1.500" stroke="#39435e" stroke-width=".7"/><circle cx="0" cy="0" r="3" fill="#3c4c7c"/><circle cx="0" cy="0" r="1.300" fill="#10182c"/></g><g transform="translate(0,3) scale(0.95)"><path d="M-7 -1c0 -6 9 -8 12 -3l2 -2v7h-7l2.500 -2.500c-2 -3 -6 -2 -6.500 0.500z" fill="#52b838" stroke="#2a7a1c" stroke-width=".5"/><path d="M7 1c0 6 -9 8 -12 3l-2 2v-7h7l-2.500 2.500c2 3 6 2 6.500 -0.500z" fill="#e8d800" stroke="#8a8000" stroke-width=".5"/></g></g>
<g transform="translate(188.0,78.0) scale(1.08)"><g transform="translate(0,-5)"><path d="M-9 2c3 -6 13 -7 18 -1c-5 3 -12 4 -18 1z" fill="#a8b0cc"/><path d="M-9 2c3 -6 13 -7 18 -1" fill="none" stroke="#39435e" stroke-width="1.3"/><path d="M-7 -2l-1 -2M-3 -4l-.5 -2M1 -4.500v-2M5 -3.500l1 -2M8 -1.500l1.500 -1.500" stroke="#39435e" stroke-width=".7"/><circle cx="0" cy="0" r="3" fill="#3c4c7c"/><circle cx="0" cy="0" r="1.300" fill="#10182c"/></g><path d="M-9.0 2.0h6.0M-6.0 -1.0v6.0" stroke="#58d02c" stroke-width="1.8"/><path d="M-4 9l7 -9" stroke="#111" stroke-width="1.200"/><path d="M1.5 7.0h7.0" stroke="#e8e000" stroke-width="2.2"/><path d="M1.5 8.1h7.0" stroke="#a09a00" stroke-width=".5"/></g>
<g transform="translate(214.0,78.0) scale(1.08)"><g transform="translate(0,-4)"><path d="M-9 2c3 -6 13 -7 18 -1c-5 3 -12 4 -18 1z" fill="#a8b0cc"/><path d="M-9 2c3 -6 13 -7 18 -1" fill="none" stroke="#39435e" stroke-width="1.3"/><path d="M-7 -2l-1 -2M-3 -4l-.5 -2M1 -4.500v-2M5 -3.500l1 -2M8 -1.500l1.500 -1.500" stroke="#39435e" stroke-width=".7"/><circle cx="0" cy="0" r="3" fill="#3c4c7c"/><circle cx="0" cy="0" r="1.300" fill="#10182c"/></g><path d="M-3.5 5.0h9.0M1.0 0.5v9.0" stroke="#58d02c" stroke-width="2.4"/></g>
<g transform="translate(240.0,78.0) scale(1.08)"><g transform="translate(0,-4)"><path d="M-9 2c3 -6 13 -7 18 -1c-5 3 -12 4 -18 1z" fill="#a8b0cc"/><path d="M-9 2c3 -6 13 -7 18 -1" fill="none" stroke="#39435e" stroke-width="1.3"/><path d="M-7 -2l-1 -2M-3 -4l-.5 -2M1 -4.500v-2M5 -3.500l1 -2M8 -1.500l1.500 -1.500" stroke="#39435e" stroke-width=".7"/><circle cx="0" cy="0" r="3" fill="#3c4c7c"/><circle cx="0" cy="0" r="1.300" fill="#10182c"/></g><path d="M-3.0 4.0h10.0" stroke="#e8e000" stroke-width="2.4"/><path d="M-3.0 5.2h10.0" stroke="#a09a00" stroke-width=".5"/></g>
<g transform="translate(283.0,78.0) scale(1.08)"><path d="M-8 -1c0 -7 10 -9 13 -3l2 -2.500v8h-8l3 -3c-2 -3 -6 -2 -6 2z" fill="url(#gArr)" stroke="#3a70b8" stroke-width=".5"/><path d="M8 1c0 7 -10 9 -13 3l-2 2.500v-8h8l-3 3c2 3 6 2 6 -2z" fill="url(#gArr)" stroke="#3a70b8" stroke-width=".5"/></g>
<g transform="translate(310.0,78.0) scale(1.08)"><g transform="translate(0,0)"><path d="M-5.0 -6.0v12.0a5.0 1.9 0 0 0 10.0 0v-12.0" fill="none" stroke="#222" stroke-width="1.0"/><ellipse cx="0" cy="-6.0" rx="5.0" ry="1.9" fill="none" stroke="#222" stroke-width="1.0"/><path d="M-5.0 6.0a5.0 1.9 0 0 1 10.0 0" fill="none" stroke="#222" stroke-width="0.7" opacity=".6"/></g></g>
<g transform="translate(336.0,78.0) scale(1.08)"><g transform="translate(0,0)"><path d="M-5.0 -6.0v12.0a5.0 1.9 0 0 0 10.0 0v-12.0" fill="none" stroke="#222" stroke-width="1.0"/><ellipse cx="0" cy="-6.0" rx="5.0" ry="1.9" fill="none" stroke="#222" stroke-width="1.0"/></g></g>
<g transform="translate(362.0,78.0) scale(1.08)"><g transform="translate(0,0)"><path d="M-5.0 -6.0v12.0a5.0 1.9 0 0 0 10.0 0v-12.0" fill="none" stroke="#333" stroke-width="1.0"/><ellipse cx="0" cy="-6.0" rx="5.0" ry="1.9" fill="none" stroke="#333" stroke-width="1.0"/><path d="M-5.0 6.0a5.0 1.9 0 0 1 10.0 0" fill="none" stroke="#333" stroke-width="0.7" opacity=".6"/></g></g>
<g transform="translate(388.5,78.0) scale(1.08)"><ellipse cx="3" cy="7" rx="6" ry="1.5" fill="rgba(0,0,0,.25)"/><g transform="translate(0,0)"><path d="M-5.0 -6.0v12.0a5.0 1.9 0 0 0 10.0 0v-12.0" fill="url(#gBlue)" stroke="#18d8f0" stroke-width="1.2"/><ellipse cx="0" cy="-6.0" rx="5.0" ry="1.9" fill="#6c94dc" stroke="#18d8f0" stroke-width="1.2"/></g></g>
<g transform="translate(413.0,78.0) scale(1.08)"><ellipse cx="3" cy="7" rx="6" ry="1.5" fill="rgba(0,0,0,.25)"/><g transform="translate(0,0)"><path d="M-5.0 -6.0v12.0a5.0 1.9 0 0 0 10.0 0v-12.0" fill="url(#gBlue)" stroke="#0c1020" stroke-width="1.1"/><ellipse cx="0" cy="-6.0" rx="5.0" ry="1.9" fill="#4a70c0" stroke="#0c1020" stroke-width="1.1"/></g></g>
<g transform="translate(440.0,78.0) scale(1.08)"><ellipse cx="3" cy="7" rx="6" ry="1.5" fill="rgba(0,0,0,.25)"/><g transform="translate(0,0)"><path d="M-5.0 -6.0v12.0a5.0 1.9 0 0 0 10.0 0v-12.0" fill="url(#gBlueL)" stroke="#30dcf0" stroke-width="1.1"/><ellipse cx="0" cy="-6.0" rx="5.0" ry="1.9" fill="#e8f0fc" stroke="#30dcf0" stroke-width="1.1"/><path d="M-5.0 6.0a5.0 1.9 0 0 1 10.0 0" fill="none" stroke="#30dcf0" stroke-width="0.8" opacity=".6"/></g></g>
<g transform="translate(466.5,78.0) scale(1.08)"><ellipse cx="3" cy="7" rx="6" ry="1.5" fill="rgba(0,0,0,.25)"/><g transform="translate(0,0)"><path d="M-5.0 -6.0v12.0a5.0 1.9 0 0 0 10.0 0v-12.0" fill="url(#gBlueL)" stroke="#444c60" stroke-width="1.0"/><ellipse cx="0" cy="-6.0" rx="5.0" ry="1.9" fill="#e8f0fc" stroke="#444c60" stroke-width="1.0"/><path d="M-5.0 6.0a5.0 1.9 0 0 1 10.0 0" fill="none" stroke="#444c60" stroke-width="0.7" opacity=".6"/></g></g>
<g transform="translate(492.0,78.0) scale(1.08)"><g transform="translate(0,0)"><path d="M-5.0 -6.0v12.0a5.0 1.9 0 0 0 10.0 0v-12.0" fill="none" stroke="#222" stroke-width="1.0"/><ellipse cx="0" cy="-6.0" rx="5.0" ry="1.9" fill="none" stroke="#222" stroke-width="1.0"/></g><path d="M-3 -6l2 13M0 -5l-2 12M3 -6l-1 13M1 -5l3 11M-4 0l3 -5" stroke="#333" stroke-width=".6" fill="none"/></g>
<g transform="translate(517.0,78.0) scale(1.08)"><g transform="translate(-4,-3)"><path d="M-4.0 -5.0v10.0a4.0 1.6 0 0 0 8.0 0v-10.0" fill="#f0f0f0" stroke="#555" stroke-width="1.0"/><ellipse cx="0" cy="-5.0" rx="4.0" ry="1.6" fill="#f0f0f0" stroke="#555" stroke-width="1.0"/><path d="M-4.0 5.0a4.0 1.6 0 0 1 8.0 0" fill="none" stroke="#555" stroke-width="0.7" opacity=".6"/></g><g transform="translate(4,3)"><path d="M-4.0 -5.0v10.0a4.0 1.6 0 0 0 8.0 0v-10.0" fill="url(#gBlue)" stroke="#0c1020" stroke-width="1.0"/><ellipse cx="0" cy="-5.0" rx="4.0" ry="1.6" fill="#4a70c0" stroke="#0c1020" stroke-width="1.0"/></g><path d="M1 -8c3 -1 5 0 6 2l1.500 -1v4h-4l1 -1.500c-1 -1.500 -3 -2 -5 -1z" fill="#2cb82c"/><path d="M-1 9c-3 1 -5 0 -6 -2l-1.500 1v-4h4l-1 1.500c1 1.500 3 2 5 1z" fill="#2cb82c"/></g>
<g transform="translate(543.0,78.0) scale(1.08)"><g transform="translate(-2,-1)"><path d="M-5.0 -6.0v12.0a5.0 1.9 0 0 0 10.0 0v-12.0" fill="url(#gBlue)" stroke="#0c1020" stroke-width="1.0"/><ellipse cx="0" cy="-6.0" rx="5.0" ry="1.9" fill="#4a70c0" stroke="#0c1020" stroke-width="1.0"/></g><g transform="translate(4,4) scale(.65)"><path d="M-8 -1c0 -7 10 -9 13 -3l2 -2.500v8h-8l3 -3c-2 -3 -6 -2 -6 2z" fill="url(#gArr)" stroke="#3a70b8" stroke-width=".5"/><path d="M8 1c0 7 -10 9 -13 3l-2 2.500v-8h8l-3 3c2 3 6 2 6 -2z" fill="url(#gArr)" stroke="#3a70b8" stroke-width=".5"/></g></g>
<g transform="translate(570.5,78.0) scale(1.08)"><rect x="-8" y="-7" width="14" height="11" fill="#50607c" stroke="#303a50" stroke-width=".6"/><path d="M-7 8l10 -11" stroke="#3a78cc" stroke-width="2.200"/><path d="M2 -5a3 3 0 1 0 4 4" fill="none" stroke="#3a78cc" stroke-width="1.800"/><path d="M8 8l-9 -10" stroke="#c8c8c8" stroke-width="2"/><path d="M-4 -6l4 4" stroke="#e8e8e8" stroke-width="2.600"/></g>
<g transform="translate(612.0,78.0) scale(1.08)"><g transform="translate(-1,-4)"><g transform="translate(-4,0) scale(0.8)"><path d="M-6 -3l6 -3l6 3v7l-6 3l-6 -3z" fill="#8a8a86" stroke="#444" stroke-width=".6"/><path d="M-6 -3l6 3l6 -3l-6 -3z" fill="#c8c8c4" stroke="#444" stroke-width=".5"/><path d="M0 0v7l6 -3v-7z" fill="#6a6a66"/></g><path d="M0 -2.500l5 -2.500l5 2.500v6l-5 2.500l-5 -2.500zM0 -2.500l5 2.500l5 -2.500M5 0v6" fill="#f0f0f0" stroke="#555" stroke-width=".6"/></g><path d="M-9.5 4.0h7.0M-6.0 0.5v7.0" stroke="#58d02c" stroke-width="2.0"/><g transform="translate(5,5)"><path d="M-3.500 -1.500l5 5c3 -1 3 -5 0 -5.500" fill="none" stroke="#3a78cc" stroke-width="1.600"/><path d="M-4.500 -2.500l4 0l-4 4z" fill="#3a78cc"/></g></g>
<g transform="translate(638.0,78.0) scale(1.08)"><g transform="translate(-1,-5)"><g transform="translate(-4,0) scale(0.8)"><path d="M-6 -3l6 -3l6 3v7l-6 3l-6 -3z" fill="#8a8a86" stroke="#444" stroke-width=".6"/><path d="M-6 -3l6 3l6 -3l-6 -3z" fill="#c8c8c4" stroke="#444" stroke-width=".5"/><path d="M0 0v7l6 -3v-7z" fill="#6a6a66"/></g><path d="M0 -2.500l5 -2.500l5 2.500v6l-5 2.500l-5 -2.500zM0 -2.500l5 2.500l5 -2.500M5 0v6" fill="#f0f0f0" stroke="#555" stroke-width=".6"/></g><g transform="translate(-5,3)"><rect x="-2.800" y="-6" width="5.600" height="12" rx="1.500" fill="#111"/><circle cy="-2.800" r="2" fill="#f0c010"/><circle cy="2.800" r="2" fill="#20d020"/></g><g transform="translate(5,3)"><rect x="-2.800" y="-6" width="5.600" height="12" rx="1.500" fill="#111"/><circle cy="-2.800" r="2" fill="#e81818"/><circle cy="2.800" r="2" fill="#f0c010"/></g></g>
<g transform="translate(664.0,78.0) scale(1.08)"><g transform="translate(-1,-5)"><g transform="translate(-4,0) scale(0.8)"><path d="M-6 -3l6 -3l6 3v7l-6 3l-6 -3z" fill="#8a8a86" stroke="#444" stroke-width=".6"/><path d="M-6 -3l6 3l6 -3l-6 -3z" fill="#c8c8c4" stroke="#444" stroke-width=".5"/><path d="M0 0v7l6 -3v-7z" fill="#6a6a66"/></g><path d="M0 -2.500l5 -2.500l5 2.500v6l-5 2.500l-5 -2.500zM0 -2.500l5 2.500l5 -2.500M5 0v6" fill="#f0f0f0" stroke="#555" stroke-width=".6"/></g><g transform="translate(0,3) scale(0.95)"><path d="M-7 -1c0 -6 9 -8 12 -3l2 -2v7h-7l2.500 -2.500c-2 -3 -6 -2 -6.500 0.500z" fill="#52b838" stroke="#2a7a1c" stroke-width=".5"/><path d="M7 1c0 6 -9 8 -12 3l-2 2v-7h7l-2.500 2.500c2 3 6 2 6.500 -0.500z" fill="#e8d800" stroke="#8a8000" stroke-width=".5"/></g></g>
<g transform="translate(690.0,78.0) scale(1.08)"><g transform="translate(-1,-5)"><g transform="translate(-4,0) scale(0.8)"><path d="M-6 -3l6 -3l6 3v7l-6 3l-6 -3z" fill="#8a8a86" stroke="#444" stroke-width=".6"/><path d="M-6 -3l6 3l6 -3l-6 -3z" fill="#c8c8c4" stroke="#444" stroke-width=".5"/><path d="M0 0v7l6 -3v-7z" fill="#6a6a66"/></g><path d="M0 -2.500l5 -2.500l5 2.500v6l-5 2.500l-5 -2.500zM0 -2.500l5 2.500l5 -2.500M5 0v6" fill="#f0f0f0" stroke="#555" stroke-width=".6"/></g><path d="M-9.0 2.0h6.0M-6.0 -1.0v6.0" stroke="#58d02c" stroke-width="1.8"/><path d="M-4 9l7 -9" stroke="#111" stroke-width="1.200"/><path d="M1.5 7.0h7.0" stroke="#e8e000" stroke-width="2.2"/><path d="M1.5 8.1h7.0" stroke="#a09a00" stroke-width=".5"/></g>
<g transform="translate(717.0,78.0) scale(1.08)"><ellipse cx="3" cy="7" rx="6" ry="1.5" fill="rgba(0,0,0,.25)"/><g transform="translate(0,0)"><path d="M-5.0 -6.0v12.0a5.0 1.9 0 0 0 10.0 0v-12.0" fill="url(#gBlue)" stroke="#0c1020" stroke-width="1.0"/><ellipse cx="0" cy="-6.0" rx="5.0" ry="1.9" fill="#4a70c0" stroke="#0c1020" stroke-width="1.0"/></g><path d="M0 -4v11" stroke="#fff" stroke-width="1" stroke-dasharray="2 2"/></g>
<g transform="translate(743.0,78.0) scale(1.08)"><ellipse cx="3" cy="7" rx="6" ry="1.5" fill="rgba(0,0,0,.25)"/><g transform="translate(0,0)"><path d="M-5.0 -6.0v12.0a5.0 1.9 0 0 0 10.0 0v-12.0" fill="url(#gBlueL)" stroke="#0c1020" stroke-width="1.0"/><ellipse cx="0" cy="-6.0" rx="5.0" ry="1.9" fill="#c8d4f0" stroke="#0c1020" stroke-width="1.0"/></g><path d="M-2 -5v13M1.500 -5v13" stroke="#e8e040" stroke-width="1.400"/><path d="M-4 -5v12M4 -5v12" stroke="#5a78b8" stroke-width="1.200"/></g>
<g transform="translate(769.5,78.0) scale(1.08)"><ellipse cx="3" cy="7" rx="6" ry="1.5" fill="rgba(0,0,0,.25)"/><g transform="translate(0,0)"><path d="M-5.0 -6.0v12.0a5.0 1.9 0 0 0 10.0 0v-12.0" fill="url(#gBlueL)" stroke="#30dcf0" stroke-width="1.0"/><ellipse cx="0" cy="-6.0" rx="5.0" ry="1.9" fill="#e8f0fc" stroke="#30dcf0" stroke-width="1.0"/><path d="M-5.0 6.0a5.0 1.9 0 0 1 10.0 0" fill="none" stroke="#30dcf0" stroke-width="0.7" opacity=".6"/></g><path d="M-4 0l3 4l6 -8" fill="none" stroke="#3cb82c" stroke-width="2.400"/></g>
<g transform="translate(795.0,78.0) scale(1.08)"><ellipse cx="-3" cy="6" rx="6" ry="1.5" fill="rgba(0,0,0,.25)"/><g transform="translate(0,0)"><path d="M-5.0 -6.0v12.0a5.0 1.9 0 0 0 10.0 0v-12.0" fill="url(#gBlueL)" stroke="#30dcf0" stroke-width="1.0"/><ellipse cx="0" cy="-6.0" rx="5.0" ry="1.9" fill="#e8f0fc" stroke="#30dcf0" stroke-width="1.0"/><path d="M-5.0 6.0a5.0 1.9 0 0 1 10.0 0" fill="none" stroke="#30dcf0" stroke-width="0.7" opacity=".6"/></g><rect x="3" y="-9" width="5" height="5" fill="none" stroke="#e89020" stroke-width="1.300"/><circle cx="5" cy="-6" r="1.300" fill="#e05010"/></g>
<g transform="translate(821.0,78.0) scale(1.08)"><g transform="translate(0,0)"><path d="M-5.0 -6.0v12.0a5.0 1.9 0 0 0 10.0 0v-12.0" fill="#dce8fa" stroke="#5a9ae0" stroke-width="1.0"/><ellipse cx="0" cy="-6.0" rx="5.0" ry="1.9" fill="#dce8fa" stroke="#5a9ae0" stroke-width="1.0"/></g><path d="M-3 -6l2 13M0 -5l-2 12M3 -6l-1 13M1 -5l3 11" stroke="#5a9ae0" stroke-width=".6" fill="none"/></g>
<g transform="translate(847.0,78.0) scale(1.08)"><path d="M-8 -4l8 -3.500l8 3.500l-2 6l-6 6l-6 -6z" fill="#2c4c9c" stroke="#10204c" stroke-width=".8"/><path d="M-8 -4l8 3l8 -3l-8 -3.500z" fill="#5c8cdc" stroke="#10204c" stroke-width=".6"/><path d="M0 -1v9l6 -6l2 -6z" fill="#1c3474"/></g>
<g transform="translate(888.0,78.0) scale(1.08)"><g transform="translate(1,-2)"><path d="M-3.5 3.5l-5 5" stroke="#b4b4b4" stroke-width="2.600" stroke-linecap="round"/><circle r="5.0" fill="url(#gLens)" stroke="#7a9ccc" stroke-width="1.200"/></g><g transform="translate(5,5) scale(0.6)"><path d="M-6 -3l6 -3l6 3v7l-6 3l-6 -3z" fill="#8a8a86" stroke="#444" stroke-width=".6"/><path d="M-6 -3l6 3l6 -3l-6 -3z" fill="#c8c8c4" stroke="#444" stroke-width=".5"/><path d="M0 0v7l6 -3v-7z" fill="#6a6a66"/></g><path d="M-10 -8h4M-8 -10v4M-10 -4h4" stroke="#000" stroke-width=".8"/><path d="M-.500 -4.500l4 2.500l-4 2.500z" fill="none" stroke="#6a8cb8" stroke-width=".8"/></g>
<g transform="translate(914.0,78.0) scale(1.08)"><g transform="translate(0,-2)"><path d="M-3.5 3.5l-5 5" stroke="#b4b4b4" stroke-width="2.600" stroke-linecap="round"/><circle r="5.0" fill="url(#gLens)" stroke="#7a9ccc" stroke-width="1.200"/></g><g transform="translate(5,5) scale(0.6)"><path d="M-6 -3l6 -3l6 3v7l-6 3l-6 -3z" fill="#8a8a86" stroke="#444" stroke-width=".6"/><path d="M-6 -3l6 3l6 -3l-6 -3z" fill="#c8c8c4" stroke="#444" stroke-width=".5"/><path d="M0 0v7l6 -3v-7z" fill="#6a6a66"/></g><path d="M-8 -8l3 3M-8 -8h3M-8 -8v3" stroke="#38b828" stroke-width="1.300" fill="none"/><path d="M8 -8l-3 3M8 -8h-3M8 -8v3" stroke="#38b828" stroke-width="1.300" fill="none"/><path d="M-8 8l3 -3M-8 8h3M-8 8v-3" stroke="#38b828" stroke-width="1.300" fill="none"/><path d="M8 8l-3 -3M8 8h-3M8 8v-3" stroke="#38b828" stroke-width="1.300" fill="none"/><path d="M-1.500 -4.500l4 2.500l-4 2.500z" fill="none" stroke="#6a8cb8" stroke-width=".8"/></g>
<g transform="translate(941.0,78.0) scale(1.08)"><rect x="-6" y="-5" width="12" height="10" fill="#e8eefc" stroke="#111" stroke-width="1.200"/><path d="M-3 -2.500v5M3 -2.500v5" stroke="#2030a0" stroke-width="1.400"/><path d="M0 -1.500v.8M0 1v.8" stroke="#c02020" stroke-width="1.200"/><path d="M-8 -8l3 3M-8 -8h3M-8 -8v3" stroke="#38b828" stroke-width="1.300" fill="none"/><path d="M8 -8l-3 3M8 -8h-3M8 -8v3" stroke="#38b828" stroke-width="1.300" fill="none"/><path d="M-8 8l3 -3M-8 8h3M-8 8v-3" stroke="#38b828" stroke-width="1.300" fill="none"/><path d="M8 8l-3 -3M8 8h-3M8 8v-3" stroke="#38b828" stroke-width="1.300" fill="none"/></g>
<g transform="translate(967.0,78.0) scale(1.08)"><path d="M-6 6l11 -11" stroke="#2ca82c" stroke-width="2.200"/><path d="M8 -8l-7 1.500l5.500 5.500z" fill="#2ca82c"/><circle cx="-6.500" cy="6.500" r="2.800" fill="#c8c8c8" stroke="#555" stroke-width=".6"/></g>
<g transform="translate(993.0,78.0) scale(1.08)"><g transform="translate(0,0) scale(1.15)"><path d="M-7 -1c0 -6 9 -8 12 -3l2 -2v7h-7l2.500 -2.500c-2 -3 -6 -2 -6.500 0.500z" fill="#38b030" stroke="#2a7a1c" stroke-width=".5"/><path d="M7 1c0 6 -9 8 -12 3l-2 2v-7h7l-2.500 2.500c2 3 6 2 6.500 -0.500z" fill="#38b030" stroke="#1c7a18" stroke-width=".5"/></g></g>
<g transform="translate(1019.0,78.0) scale(1.08)"><g transform="translate(0,-5)"><path d="M-9 2c3 -6 13 -7 18 -1c-5 3 -12 4 -18 1z" fill="#a8b0cc"/><path d="M-9 2c3 -6 13 -7 18 -1" fill="none" stroke="#39435e" stroke-width="1.3"/><path d="M-7 -2l-1 -2M-3 -4l-.5 -2M1 -4.500v-2M5 -3.500l1 -2M8 -1.500l1.500 -1.500" stroke="#39435e" stroke-width=".7"/><circle cx="0" cy="0" r="3" fill="#3c4c7c"/><circle cx="0" cy="0" r="1.300" fill="#10182c"/></g><circle cx="0" cy="4" r="5.500" fill="#f8d040" stroke="#c89818" stroke-width=".6"/><circle cx="-2" cy="3" r=".8" fill="#333"/><circle cx="2" cy="3" r=".8" fill="#333"/><path d="M-2.500 5.500c1.500 2 3.500 2 5 0" fill="none" stroke="#333" stroke-width=".7"/></g>
<g transform="translate(1062.0,78.0) scale(1.08)"><g transform="translate(0,0) scale(1.0)"><path d="M-9 2l9 -5l9 5l-9 5z" fill="#e8ecf4" stroke="#9aa" stroke-width=".6"/><path d="M-1 2v-9" stroke="#2060e0" stroke-width="1.600"/><path d="M-1 -10l-2.500 4h5z" fill="#2060e0"/><path d="M-1 2l6 -4" stroke="#28b030" stroke-width="1.600"/><path d="M7.500 -3.500l-4 .5l2 3z" fill="#28b030"/><path d="M-1 2l6 5" stroke="#e02020" stroke-width="1.600"/><path d="M7.500 9l-4 -1l2.500 -2.500z" fill="#e02020"/><circle cx="-1" cy="2" r="1.300" fill="#ddd" stroke="#555" stroke-width=".4"/></g></g>
<g transform="translate(1088.0,78.0) scale(1.08)"><g transform="translate(3,-4) scale(0.6)"><path d="M-9 2l9 -5l9 5l-9 5z" fill="#e8ecf4" stroke="#9aa" stroke-width=".6"/><path d="M-1 2v-9" stroke="#2060e0" stroke-width="1.600"/><path d="M-1 -10l-2.500 4h5z" fill="#2060e0"/><path d="M-1 2l6 -4" stroke="#28b030" stroke-width="1.600"/><path d="M7.500 -3.500l-4 .5l2 3z" fill="#28b030"/><path d="M-1 2l6 5" stroke="#e02020" stroke-width="1.600"/><path d="M7.500 9l-4 -1l2.500 -2.500z" fill="#e02020"/><circle cx="-1" cy="2" r="1.300" fill="#ddd" stroke="#555" stroke-width=".4"/></g><path d="M-8 8l7 -7" stroke="#2ca82c" stroke-width="3"/><path d="M2 -4l-7 1l6 6z" fill="#2ca82c"/><rect x="-1" y="4" width="8" height="5" fill="#d8dce8" stroke="#888" stroke-width=".8"/></g>
<g transform="translate(1114.0,78.0) scale(1.08)"><g transform="translate(4,-4) scale(0.6)"><path d="M-9 2l9 -5l9 5l-9 5z" fill="#e8ecf4" stroke="#9aa" stroke-width=".6"/><path d="M-1 2v-9" stroke="#2060e0" stroke-width="1.600"/><path d="M-1 -10l-2.500 4h5z" fill="#2060e0"/><path d="M-1 2l6 -4" stroke="#28b030" stroke-width="1.600"/><path d="M7.500 -3.500l-4 .5l2 3z" fill="#28b030"/><path d="M-1 2l6 5" stroke="#e02020" stroke-width="1.600"/><path d="M7.500 9l-4 -1l2.500 -2.500z" fill="#e02020"/><circle cx="-1" cy="2" r="1.300" fill="#ddd" stroke="#555" stroke-width=".4"/></g><path d="M-8 -2l8 8M-5 -5l8 8" stroke="#2ca82c" stroke-width="2.200"/><path d="M-9 -6l5 0l-5 5zM4 9l-5 0l5 -5z" fill="#2ca82c"/></g>
<g transform="translate(1157.0,78.0) scale(1.08)"><rect x="-9.5" y="-9.5" width="6" height="6" fill="#00d8f0"/><rect x="-3.1" y="-9.5" width="6" height="6" fill="#f8d800"/><rect x="3.3" y="-9.5" width="6" height="6" fill="#00d820"/><rect x="-9.5" y="-3.1" width="6" height="6" fill="#f88000"/><rect x="-3.1" y="-3.1" width="6" height="6" fill="#a86800"/><rect x="3.3" y="-3.1" width="6" height="6" fill="#f800f0"/><rect x="-9.5" y="3.3" width="6" height="6" fill="#0000f0"/><rect x="-3.1" y="3.3" width="6" height="6" fill="#00a020"/><rect x="3.3" y="3.3" width="6" height="6" fill="#888888"/></g>
<g transform="translate(1183.0,78.0) scale(1.08)"><rect x="-7" y="-9" width="14" height="18" fill="#e8eef8" stroke="#5a70a0" stroke-width="1"/><rect x="-5" y="-7" width="10" height="2" fill="#f8c860"/><path d="M-5 -3.500h10M-5 -1.500h10" stroke="#f0a0a0" stroke-width=".8"/><rect x="-5.0" y="1.0" width="3" height="3" fill="#00b8e0"/><rect x="-1.6" y="1.0" width="3" height="3" fill="#f8d800"/><rect x="1.8" y="1.0" width="3" height="3" fill="#e02020"/><rect x="-5.0" y="4.4" width="3" height="3" fill="#20b020"/><rect x="-1.6" y="4.4" width="3" height="3" fill="#f88000"/><rect x="1.8" y="4.4" width="3" height="3" fill="#2020e0"/></g>
<g transform="translate(1209.0,78.0) scale(1.08)"><circle r="9.500" fill="#5a9a3a" stroke="#3f7426" stroke-width=".8"/><path d="M-5 6l8 -9" stroke="#e8e8e8" stroke-width="2.400"/><path d="M2 -6a3 3 0 1 0 4 4" fill="none" stroke="#e8e8e8" stroke-width="1.800"/><path d="M5 6l-8 -9" stroke="#c0c0c0" stroke-width="2"/></g>
<g transform="translate(1235.0,78.0) scale(1.08)"><rect x="-9" y="-9" width="18" height="18" fill="#e8eef8" stroke="#4a68a8" stroke-width="1"/><rect x="-9" y="-9" width="18" height="3.500" fill="#4a78c8"/><path d="M-7 -3.500v10" stroke="#a05820" stroke-width="1.400" stroke-dasharray="2 1"/><path d="M-4 -3.500h11" stroke="#58a028" stroke-width="1.400" stroke-dasharray="2 1"/><path d="M-3 7l8 -8" stroke="#7aa0d8" stroke-width="2"/><path d="M6 7l-7 -8" stroke="#b0b0b0" stroke-width="1.800"/></g>
<g transform="translate(1261.0,78.0) scale(1.08)"><rect x="-8" y="-7" width="15" height="14" fill="none" stroke="#1c2c5c" stroke-width="1.300" stroke-dasharray="1.500 1.500"/><path d="M-3 -3c2 -4 8 -6 11 -4l1 5l-5 5l-5 -2z" fill="#f0b070" stroke="#a86830" stroke-width=".6"/><path d="M-8.0 4.0h6.0M-5.0 1.0v6.0" stroke="#e8d000" stroke-width="1.6"/><circle cx="-5" cy="4" r="3.200" fill="none" stroke="#3a78cc" stroke-width=".8"/></g>
<g transform="translate(1287.0,78.0) scale(1.08)"><path d="M-8 8l3 -15l14 -2l-3 15z" fill="#e89090" stroke="#2c58c0" stroke-width="1.600"/><path d="M-4 -6.500l-3 14M0 -7l-3 14.500M4 -8l-3 15M-7 -2.500l14 -2M-7.500 1.500l14 -2M-8 5l14 -2" stroke="#c02020" stroke-width=".7"/></g>
<g transform="translate(17.5,144.0) scale(1.0)"><path d="M-7 -7l4 1M-8 -3l3 .5M-7 1l3 -.5" stroke="#a8b8d0" stroke-width="1.400"/><g transform="translate(2,-2)"><path d="M-3.5 3.5l-5 5" stroke="#b4b4b4" stroke-width="2.600" stroke-linecap="round"/><circle r="5.0" fill="url(#gLens)" stroke="#7a9ccc" stroke-width="1.200"/></g></g>
<g transform="translate(43.5,144.0) scale(1.0)"><path d="M-8 -7l3 3M-4 -6l11 12M-3 0l8 9" stroke="#3a80e8" stroke-width="1.600"/><g transform="translate(0,0)"><path d="M-6 7l1.500 -4l9 -10l2.500 2.500l-9 10z" fill="#e0a030" stroke="#8a5810" stroke-width=".5"/><path d="M4.500 -7l1.500 -1.500l2.500 2.500l-1.500 1.500z" fill="#e03020"/><path d="M-6 7l1.500 -4l2.500 2.500z" fill="#f0d8a8"/><path d="M-6 7l.8 -1.800l1 1z" fill="#222"/></g></g>
<g transform="translate(17.5,170.0) scale(1.0)"><rect x="-6" y="-5" width="12" height="10" fill="url(#gDoc)" stroke="#8a90a0" stroke-width=".8"/><path d="M-8 -8l3 3M-8 -8h3M-8 -8v3" stroke="#38b828" stroke-width="1.300" fill="none"/><path d="M8 -8l-3 3M8 -8h-3M8 -8v3" stroke="#38b828" stroke-width="1.300" fill="none"/><path d="M-8 8l3 -3M-8 8h3M-8 8v-3" stroke="#38b828" stroke-width="1.300" fill="none"/><path d="M8 8l-3 -3M8 8h-3M8 8v-3" stroke="#38b828" stroke-width="1.300" fill="none"/></g>
<g transform="translate(43.5,170.0) scale(1.0)"><path d="M-6 -4c-4 -3 2 -7 4 -2c2 5 -3 9 2 9c5 0 6 -6 1 -7" fill="none" stroke="#3a80e8" stroke-width="1.600"/><g transform="translate(0,-1)"><path d="M-6 7l1.500 -4l9 -10l2.500 2.500l-9 10z" fill="#e0a030" stroke="#8a5810" stroke-width=".5"/><path d="M4.500 -7l1.500 -1.500l2.500 2.500l-1.500 1.500z" fill="#e03020"/><path d="M-6 7l1.500 -4l2.500 2.500z" fill="#f0d8a8"/><path d="M-6 7l.8 -1.800l1 1z" fill="#222"/></g></g>
<g transform="translate(17.5,196.0) scale(1.0)"><g transform="translate(1,-2)"><path d="M-3.5 3.5l-5 5" stroke="#b4b4b4" stroke-width="2.600" stroke-linecap="round"/><circle r="5.0" fill="url(#gLens)" stroke="#7a9ccc" stroke-width="1.200"/></g><g transform="translate(5,5) scale(0.6)"><path d="M-6 -3l6 -3l6 3v7l-6 3l-6 -3z" fill="#8a8a86" stroke="#444" stroke-width=".6"/><path d="M-6 -3l6 3l6 -3l-6 -3z" fill="#c8c8c4" stroke="#444" stroke-width=".5"/><path d="M0 0v7l6 -3v-7z" fill="#6a6a66"/></g><path d="M-10 -8h4M-8 -10v4M-10 -4h4" stroke="#000" stroke-width=".8"/><path d="M-.500 -4.500l4 2.500l-4 2.500z" fill="none" stroke="#6a8cb8" stroke-width=".8"/></g>
<g transform="translate(43.5,196.0) scale(1.0)"><rect x="-7" y="-7" width="14" height="13" fill="#f4f8e8" stroke="#e8e000" stroke-width="1.600"/><rect x="3" y="2" width="5" height="5" fill="#d6dbe9" stroke="#e8e000" stroke-width="1.200"/><path d="M-4 -1l3 4l6 -8" fill="none" stroke="#3cb82c" stroke-width="2.400"/></g>
<g transform="translate(17.5,222.0) scale(1.0)"><g transform="translate(0,0) scale(1.0)"><path d="M-9 2l9 -5l9 5l-9 5z" fill="#e8ecf4" stroke="#9aa" stroke-width=".6"/><path d="M-1 2v-9" stroke="#2060e0" stroke-width="1.600"/><path d="M-1 -10l-2.500 4h5z" fill="#2060e0"/><path d="M-1 2l6 -4" stroke="#28b030" stroke-width="1.600"/><path d="M7.500 -3.500l-4 .5l2 3z" fill="#28b030"/><path d="M-1 2l6 5" stroke="#e02020" stroke-width="1.600"/><path d="M7.500 9l-4 -1l2.500 -2.500z" fill="#e02020"/><circle cx="-1" cy="2" r="1.300" fill="#ddd" stroke="#555" stroke-width=".4"/></g></g>
<g transform="translate(43.5,222.0) scale(1.0)"><path d="M-8 2c2 -10 6 -10 8 0c2 8 5 8 8 0" fill="none" stroke="#3a80e8" stroke-width="1.600"/><g transform="translate(0,-1)"><path d="M-6 7l1.500 -4l9 -10l2.500 2.500l-9 10z" fill="#e0a030" stroke="#8a5810" stroke-width=".5"/><path d="M4.500 -7l1.500 -1.500l2.500 2.500l-1.500 1.500z" fill="#e03020"/><path d="M-6 7l1.500 -4l2.500 2.500z" fill="#f0d8a8"/><path d="M-6 7l.8 -1.800l1 1z" fill="#222"/></g></g>
<g transform="translate(17.5,248.0) scale(1.0)"><path d="M-8 -7h9l2 2h-11z M-8 -4h11v2.500h-11z M-8 -1h11v2h-11z" fill="#8c9cd8" stroke="#5060a0" stroke-width=".4"/><ellipse cx="0" cy="5" rx="8" ry="4.500" fill="#c89870" stroke="#6a4020" stroke-width=".7"/><circle cx="-3.500" cy="5.500" r="1.700" fill="#1848e0"/><circle cx="0.500" cy="6.500" r="1.700" fill="#18b828"/><circle cx="4" cy="4" r="1.700" fill="#e02020"/><path d="M8 -8l-6 10" stroke="#b06a28" stroke-width="1.800"/><path d="M2.800 0.500l-1.200 2.500" stroke="#555" stroke-width="2"/></g>
<g transform="translate(43.5,248.0) scale(1.0)"><path d="M-8 7l4 -13l13 -2l-4 13z" fill="#a8ccf8" stroke="#2c60d0" stroke-width="1.400"/><path d="M-2 -7l-4 13.500M-6.500 .5l13 -2" stroke="#e8f4ff" stroke-width="1.200"/></g>
<g transform="translate(17.5,274.0) scale(1.0)"><path d="M-8 -1c0 -7 10 -9 13 -3l2 -2.500v8h-8l3 -3c-2 -3 -6 -2 -6 2z" fill="url(#gArr)" stroke="#3a70b8" stroke-width=".5"/><path d="M8 1c0 7 -10 9 -13 3l-2 2.500v-8h8l-3 3c2 3 6 2 6 -2z" fill="url(#gArr)" stroke="#3a70b8" stroke-width=".5"/></g>
<g transform="translate(43.5,274.0) scale(1.0)"><ellipse cx="1" cy="8" rx="7" ry="1.6" fill="rgba(0,0,0,.25)"/><g transform="translate(0,0) scale(1.3)"><path d="M-6 -3l6 -3l6 3v7l-6 3l-6 -3z" fill="#8a8a86" stroke="#444" stroke-width=".6"/><path d="M-6 -3l6 3l6 -3l-6 -3z" fill="#c8c8c4" stroke="#444" stroke-width=".5"/><path d="M0 0v7l6 -3v-7z" fill="#6a6a66"/></g></g>
<g transform="translate(17.5,300.0) scale(1.0)"><ellipse cx="0" cy="8.500" rx="5" ry="1.200" fill="rgba(0,0,0,.2)"/><path d="M-4 -4c0 -5 8 -5 8 -.5c0 3 -4 3 -4 6.500" fill="none" stroke="#3a68c0" stroke-width="2.600"/><circle cx="0" cy="6" r="1.600" fill="#3a68c0"/></g>
<g transform="translate(43.5,300.0) scale(1.0)"><path d="M-8 -5v13M8 -5v13" stroke="#111" stroke-width="1.200"/><path d="M-7 -3h14" stroke="#e8e000" stroke-width="2"/><path d="M-7 -3l3 -2v4zM7 -3l-3 -2v4z" fill="#e8e000" stroke="#8a8400" stroke-width=".4"/></g>
<g transform="translate(17.5,326.0) scale(1.0)"><path d="M-6 -4h12l-1.500 12h-9z" fill="#a8d4e8" stroke="#4a7a98" stroke-width=".8"/><ellipse cx="0" cy="-4" rx="6.500" ry="2" fill="#d8ecf8" stroke="#4a7a98" stroke-width=".8"/><path d="M-2 -8l3 4l-2 0l1 3" stroke="#c8b820" stroke-width="1.400" fill="none"/><path d="M-2 0l2 3l2 -2l1 4" stroke="#68b048" stroke-width="1" fill="none"/></g>
<g transform="translate(43.5,326.0) scale(1.0)"><ellipse cx="1" cy="8" rx="7" ry="1.6" fill="rgba(0,0,0,.18)"/><path d="M-8 -3l7 -6v4c6 0 8 4 8 8c0 3 -2 5 -4 5c2 -2 2 -6 -4 -6v4z" fill="#b0b0b0" stroke="#888" stroke-width=".5"/></g>
<g transform="translate(17.5,352.0) scale(1.0)"><path d="M-8 -8v13" stroke="#333" stroke-width="1.600"/><path d="M-6 -8v13" stroke="#49a" stroke-width="1"/><circle cx="2" cy="-1" r="5.500" fill="none" stroke="#a05018" stroke-width="1.600"/><path d="M2 -9v16M-6 -1h16M-3.500 -6.500l11 11M7.500 -6.500l-11 11" stroke="#a05018" stroke-width="1"/><path d="M-9 7l6 -3l11 1l-6 4zM-6 9l12 -4M-3 5l2 4M3 5l-1 5" fill="none" stroke="#f08018" stroke-width="1.500"/></g>
<g transform="translate(43.5,352.0) scale(1.0)"><path d="M-1 -1h9v10h-14v-5" fill="#f8f8f8" stroke="#222" stroke-width="1"/><g transform="translate(-2,-2) scale(0.85)"><path d="M-8 -5l2 -2h5l1 2h6v3h-14z" fill="#f3d26a" stroke="#c9a23a" stroke-width=".6"/><path d="M-9 7l2.5 -9h15.5l-3 9z" fill="url(#gFold)" stroke="#d2a63c" stroke-width=".7"/></g><path d="M-2 -8h5v3h-5z" fill="#38b038"/></g>
<path d="M47.500 133h6l-3 3z" fill="#000"/>
<path d="M47.500 159h6l-3 3z" fill="#000"/>
<path d="M21.500 185h6l-3 3z" fill="#000"/>
<path d="M47.500 185h6l-3 3z" fill="#000"/>
<path d="M21.500 211h6l-3 3z" fill="#000"/>
<path d="M47.500 211h6l-3 3z" fill="#000"/>
<path d="M21.500 237h6l-3 3z" fill="#000"/>
<path d="M47.500 237h6l-3 3z" fill="#000"/>
<path d="M21.500 263h6l-3 3z" fill="#000"/>
<path d="M47.500 263h6l-3 3z" fill="#000"/>
<path d="M21.500 289h6l-3 3z" fill="#000"/>
<path d="M47.500 289h6l-3 3z" fill="#000"/>
<path d="M21.500 315h6l-3 3z" fill="#000"/>
<path d="M47.500 315h6l-3 3z" fill="#000"/>
<path d="M21.500 341h6l-3 3z" fill="#000"/>
<g transform="translate(1465,1011)"><circle cx="1.500" cy="-1.500" r="3.500" fill="#fff" stroke="#3a78cc" stroke-width="1.300"/><path d="M-1 1l-4 4" stroke="#3a78cc" stroke-width="1.600"/></g>
<g transform="translate(1901,1010)"><circle r="6" fill="#2050c0" stroke="#102060" stroke-width=".6"/><path d="M-4 -2c2 -3 5 -3 6 -1c1 2 -2 3 -3 5c-2 0 -3 -2 -3 -4z" fill="#30b030"/><path d="M2 3c1 -1 3 -1 3 0c0 1 -2 2 -3 0z" fill="#30b030"/><circle cx="-2" cy="-2.500" r="1.500" fill="rgba(255,255,255,.5)"/></g>
<g transform="translate(1190,1030)"><rect x="-8" y="-8" width="16" height="16" fill="#c8ccd8" stroke="#6a7088" stroke-width="1"/><g transform="scale(.6)"><path d="M-8 -1c0 -7 10 -9 13 -3l2 -2.500v8h-8l3 -3c-2 -3 -6 -2 -6 2z" fill="#e06878" stroke="#c04050" stroke-width=".5"/><path d="M8 1c0 7 -10 9 -13 3l-2 2.500v-8h8l-3 3c2 3 6 2 6 -2z" fill="#e06878" stroke="#c04050" stroke-width=".5"/></g></g>
<g transform="translate(1221,1030)"><rect x="-9" y="-9" width="18" height="18" fill="#fce27c"/><path d="M-5 -7l2 4l-4 1l4 2l-1 4l3 -3" stroke="#c040c0" stroke-width="1.200" fill="#e8a020"/><path d="M-2 -2l8 4l-3 1l3 4l-2 1l-3 -4l-2 2z" fill="#e8e8f0" stroke="#555" stroke-width=".7"/></g>
<g transform="translate(1252,1030)"><path d="M-6 -1l6 -5l6 5v8h-12z" fill="#d8e4f8" stroke="#4a68a8" stroke-width=".8"/><path d="M-2 -6c2 -3 8 -3 9 0l-3 3l-5 -1z" fill="#f0b070" stroke="#a86830" stroke-width=".5"/><rect x="-3" y="2" width="2.500" height="2.500" fill="#3a78cc"/><rect x="1" y="2" width="2.500" height="2.500" fill="#3a78cc"/><rect x="-1" y="5" width="2.500" height="2" fill="#3a78cc"/></g>
<g transform="translate(1283.0,1029.0) scale(.85)"><ellipse cx="0" cy="8.500" rx="5" ry="1.200" fill="rgba(0,0,0,.2)"/><path d="M-4 -4c0 -5 8 -5 8 -.5c0 3 -4 3 -4 6.500" fill="none" stroke="#3a68c0" stroke-width="2.600"/><circle cx="0" cy="6" r="1.600" fill="#3a68c0"/></g>
<g transform="translate(1314,1030)"><path d="M-5 -6l4 -2l4 2v4l-4 2l-4 -2z" fill="#4a8ae8" stroke="#1c3c8c" stroke-width=".6"/><path d="M0 1l4 -2l4 2v5l-4 2l-4 -2z" fill="#4a8c9c" stroke="#1c3c4c" stroke-width=".6"/><path d="M-9 3h7M-5 0l3 3l-3 3M-8 0l3 6M-8 6l3 -6" stroke="#e81010" stroke-width="1.200" fill="none"/></g>
<g transform="translate(1345,1030)"><rect x="-9" y="-9" width="18" height="18" fill="#fce27c"/><path d="M-7 -4l7 -3l7 3l-7 3z" fill="#e020e0"/><path d="M-7 -4v8l7 4v-9z" fill="#88b8a8" stroke="#2c60d0" stroke-width=".7"/><path d="M7 -4v8l-7 4v-9z" fill="#a8c8c0" stroke="#2c60d0" stroke-width=".7"/><path d="M0 -1v9" stroke="#2c60d0" stroke-width="1"/></g>
<rect x="1371" y="1029" width="10" height="9" fill="none" stroke="#708878" stroke-width="1.400"/>
<path d="M1431 1024v14h14M1438 1024v14M1431 1031h10" fill="none" stroke="#4a5478" stroke-width="1.400"/>
<g transform="translate(1406,1000)">
<ellipse cx="0" cy="37" rx="15" ry="2.500" fill="#c98a5a"/>
<path d="M-1 -23c-1 -5 -4 -7 -6 -8c-2 -1 -1 -4 2 -3c4 2 6 6 6 11z" fill="#8a4a1c"/><path d="M2 -23c0 -4 1 -7 3 -8c2 0 1 4 0 8z" fill="#8a4a1c"/>
<circle cx="-16.500" cy="-21.500" r="6.500" fill="#c48a50" stroke="#9a6030" stroke-width=".6"/><circle cx="-16" cy="-21" r="3" fill="#f0b8a0"/>
<circle cx="17" cy="-21.500" r="6.500" fill="#c48a50" stroke="#9a6030" stroke-width=".6"/><circle cx="16.500" cy="-21" r="3" fill="#f0b8a0"/>
<path d="M-11 20c-6 -2 -9 2 -7 5c2 2 5 1 8 -1z" fill="#fdf060" stroke="#c89020" stroke-width=".5"/>
<path d="M11 20c6 -3 10 0 8 4c-2 2 -5 1 -8 -1z" fill="#fdf060" stroke="#c89020" stroke-width=".5"/>
<path d="M-9 18c-2 8 0 14 3 15l1 3h3l0 -3h5l0 4h3l1 -4c4 -2 5 -8 3 -15z" fill="#fdf060" stroke="#c89020" stroke-width=".5"/>
<ellipse cx="0" cy="-2.500" rx="27" ry="24.500" fill="#c48a50" stroke="#9a6030" stroke-width=".7"/>
<path d="M-12 20c3 3 21 3 24 0c-2 4 -22 4 -24 0z" fill="#b07840"/>
<ellipse cx="0" cy="2" rx="22.500" ry="18.500" fill="#fdf25c" stroke="#a86820" stroke-width=".8"/>
<circle cx="-10.500" cy="-6.500" r="1.500" fill="#5a2c10"/><circle cx="10.500" cy="-6.500" r="1.500" fill="#5a2c10"/>
<ellipse cx="0" cy="-2.500" rx="1.300" ry=".8" fill="#8a4a1c"/>
<ellipse cx="-15" cy="0" rx="3.500" ry="2.500" fill="#fba830"/><ellipse cx="15" cy="0" rx="3.500" ry="2.500" fill="#fba830"/>
<path d="M9 20l-11 10" stroke="#b07840" stroke-width="1.800"/>
<circle cx="-13" cy="24" r="2.200" fill="#c48a50"/><circle cx="-3.500" cy="24" r="2.200" fill="#c48a50"/>
<ellipse cx="-8" cy="30" rx="7.500" ry="6.500" fill="#c48a50" stroke="#9a6030" stroke-width=".5"/>
<ellipse cx="-11.500" cy="31.500" rx="1.500" ry="1" fill="#f890c0"/><ellipse cx="-4.500" cy="32" rx="1.500" ry="1" fill="#f890c0"/>
<path d="M-11 29h2M-7 29.500h2" stroke="#5a2c10" stroke-width=".7"/>
</g>
<text x="1433" y="990" font-family="Liberation Sans,sans-serif" font-weight="bold" font-size="24" fill="#fff" stroke="#c48a50" stroke-width="1.600" paint-order="stroke" transform="rotate(8 1446 982)">W</text>
<circle cx="1438" cy="992" r="3.400" fill="#c99a68"/><circle cx="1453.500" cy="993" r="3.400" fill="#c99a68"/>
<text x="1437" y="1010" font-family="Liberation Sans,sans-serif" font-weight="bold" font-size="21" fill="#c99a68" stroke="#c99a68" stroke-width="2.400" transform="rotate(6 1445 1003)">O</text>
<text x="1435" y="1033" font-family="Liberation Sans,sans-serif" font-weight="bold" font-size="26" fill="#fdf25c" stroke="#c8a030" stroke-width="1.400" paint-order="stroke" transform="rotate(-8 1447 1024)">W</text>
<circle cx="1367.500" cy="1005" r="8.300" fill="#96644e"/>
<text x="1362.300" y="1010" font-family="Liberation Sans,sans-serif" font-weight="bold" font-size="14.500" fill="#fff">C</text>
<circle cx="1374.600" cy="1026.500" r="8.300" fill="#96644e"/>
<path d="M1370 1022.500l2.500 -1.500c1 1.500 3.200 1.500 4.200 0l2.500 1.500l1.800 2.500l-2 1.500l-1 -1v6h-6.800v-6l-1 1l-2 -1.500z" fill="#fff"/>
</svg>
</div></body></html>
